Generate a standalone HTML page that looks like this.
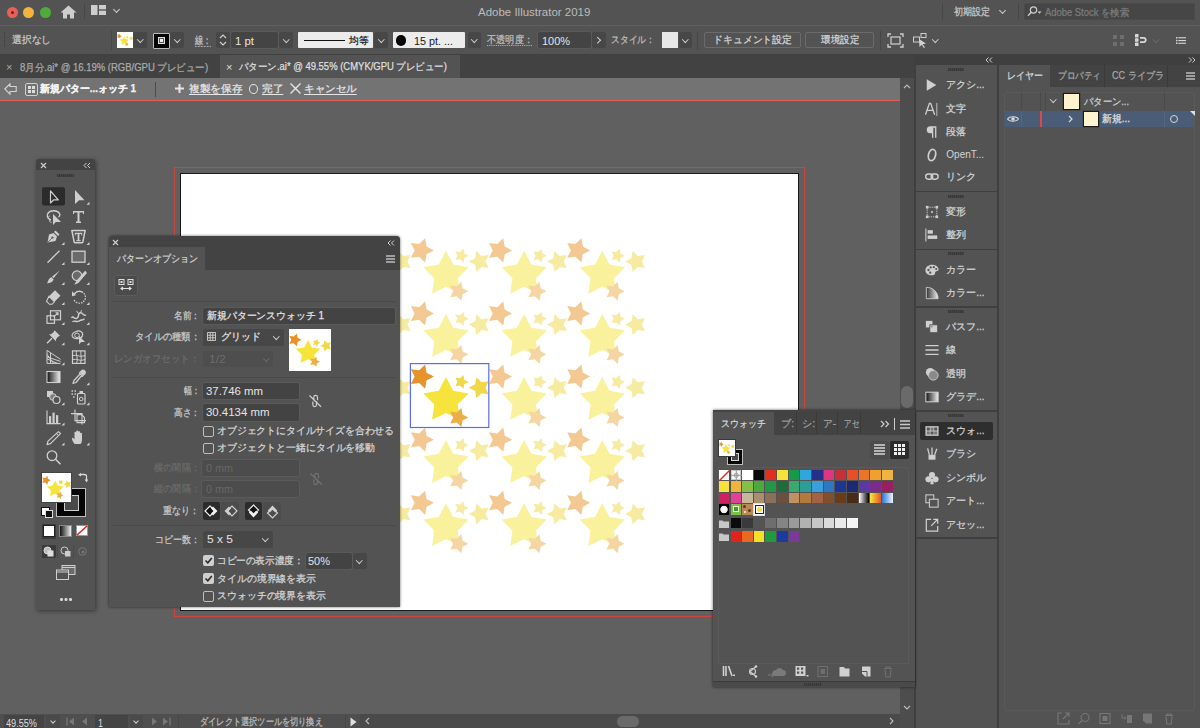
<!DOCTYPE html>
<html><head><meta charset="utf-8">
<style>
html,body{margin:0;padding:0}
body{width:1200px;height:728px;overflow:hidden;background:#606060;position:relative;font-family:"Liberation Sans",sans-serif;color:#d8d8d8;font-size:11px}
.a{position:absolute}
.t{position:absolute;white-space:nowrap;line-height:1;-webkit-text-stroke:0.25px currentColor}
.sep{position:absolute;background:#444}
.dd{position:absolute;background:#474747;border-radius:2px}
.chev{position:absolute;width:5px;height:5px;border-right:1.5px solid #cfcfcf;border-bottom:1.5px solid #cfcfcf;transform:rotate(45deg)}
.fld{position:absolute;background:#434343;border-radius:2px;box-shadow:0 0 0 1px #5a5a5a}
.cb{position:absolute;width:9px;height:9px;border:1px solid #bdbdbd;border-radius:2px}
.cbk{position:absolute;width:11px;height:11px;background:#cfcfcf;border-radius:2px}
.grip{position:absolute;height:3px;background:repeating-linear-gradient(90deg,#383838 0 1.5px,#444 1.5px 2px)}
</style></head><body>
<!-- title bar -->
<div class="a" style="left:0;top:0;width:1200px;height:25px;background:#535353"></div>
<div class="a" style="left:0;top:25.5px;width:1200px;height:1.5px;background:#444"></div>
<!-- control bar -->
<div class="a" style="left:0;top:26px;width:1200px;height:28px;background:#535353"></div>
<div class="a" style="left:0;top:54px;width:1200px;height:1px;background:#404040"></div>
<!-- doc tabs -->
<div class="a" style="left:0;top:55px;width:915px;height:23px;background:#424242"></div>
<div class="a" style="left:220px;top:55px;width:239.5px;height:23px;background:#535353"></div>
<!-- isolation bar -->
<div class="a" style="left:0;top:78px;width:900px;height:21.5px;background:#737373"></div>
<div class="a" style="left:0;top:100px;width:900px;height:2px;background:#df5f57"></div>
<!-- TITLEBAR CONTENT -->
<div class="a" style="left:6.5px;top:7px;width:11px;height:11px;border-radius:50%;background:#e9605a"></div>
<div class="a" style="left:10.5px;top:11px;width:3px;height:3px;border-radius:50%;background:#7a1a14"></div>
<div class="a" style="left:23px;top:7px;width:11px;height:11px;border-radius:50%;background:#f2b53c"></div>
<div class="a" style="left:39.5px;top:7px;width:11px;height:11px;border-radius:50%;background:#4eab3c"></div>
<svg class="a" style="left:60px;top:5px" width="17" height="14" viewBox="0 0 17 14"><path d="M8.5 0.5L0.5 7.5H3V13.5H7V9.5H10V13.5H14V7.5H16.5Z" fill="#cdcdcd"/></svg>
<div class="a" style="left:84px;top:3px;width:1px;height:16px;background:#474747"></div>
<svg class="a" style="left:91px;top:5px" width="16" height="10" viewBox="0 0 16 10"><rect x="0" y="0" width="6.5" height="10" fill="#cdcdcd"/><rect x="8" y="0" width="7" height="4.3" fill="#cdcdcd"/><rect x="8" y="5.7" width="7" height="4.3" fill="#cdcdcd"/></svg>
<div class="chev" style="left:114px;top:6.5px;width:4px;height:4px"></div>
<div class="t" style="left:478.3px;top:6.8px;font-size:11.0px;color:#bcbcbc;transform:scaleX(1.044);transform-origin:0 0;-webkit-text-stroke:0;">Adobe Illustrator 2019</div>
<div class="a" style="left:942px;top:3px;width:1px;height:17px;background:#474747"></div>
<div class="t" style="left:953.6px;top:7.3px;font-size:10.0px;color:#c8c8c8;transform:scaleX(0.900);transform-origin:0 0;">初期設定</div>
<div class="chev" style="left:999.5px;top:8px;width:4px;height:4px"></div>
<div class="a" style="left:1018px;top:3px;width:1px;height:17px;background:#474747"></div>
<div class="a" style="left:1024px;top:3px;width:171px;height:17px;background:#464646;border-radius:3px;box-shadow:inset 0 0 0 1px #4a4a4a"></div>
<svg class="a" style="left:1027px;top:6px" width="15" height="11" viewBox="0 0 15 11"><circle cx="6.5" cy="4" r="3.2" fill="none" stroke="#cfcfcf" stroke-width="1.2"/><path d="M4.3 6.3L1 9.8" stroke="#cfcfcf" stroke-width="1.3"/><path d="M10.5 5.5h4l-2 2.2z" fill="#cfcfcf"/></svg>
<div class="t" style="left:1044.8px;top:7.6px;font-size:10.0px;color:#7c7c7c;transform:scaleX(0.941);transform-origin:0 0;">Adobe Stock を検索</div>
<!-- CONTROL BAR CONTENT -->
<div class="a" style="left:4px;top:32px;width:1px;height:16px;background:repeating-linear-gradient(180deg,#3a3a3a 0 1px,transparent 1px 2px)"></div>
<div class="t" style="left:12.0px;top:35.0px;font-size:10.0px;color:#c9c9c9;transform:scaleX(0.975);transform-origin:0 0;">選択なし</div>
<div class="a" style="left:111px;top:31px;width:1px;height:19px;background:#474747"></div>
<div class="a" style="left:117px;top:32px;width:16px;height:16px;background:#fff"><svg width="16.0" height="16.0" viewBox="0 0 16.0 16.0" style="display:block"><polygon points="4.80,4.13 3.29,4.92 3.01,6.60 1.79,5.41 0.11,5.66 0.86,4.13 0.11,2.61 1.79,2.85 3.01,1.67 3.29,3.34" fill="#e8932a"/><polygon points="7.27,4.21 8.74,7.02 11.87,7.56 9.66,9.83 10.11,12.96 7.27,11.57 4.42,12.96 4.87,9.83 2.67,7.56 5.79,7.02" fill="#f6e43c"/><polygon points="11.82,12.48 10.63,13.10 10.41,14.42 9.45,13.49 8.12,13.68 8.71,12.48 8.12,11.28 9.45,11.47 10.41,10.54 10.63,11.86" fill="#ecae48"/><polygon points="11.86,5.21 10.99,5.67 10.83,6.63 10.13,5.95 9.16,6.09 9.59,5.21 9.16,4.34 10.13,4.48 10.83,3.80 10.99,4.76" fill="#f0d848"/><polygon points="11.92,6.40 13.22,5.71 13.47,4.26 14.52,5.29 15.98,5.08 15.33,6.40 15.98,7.72 14.52,7.51 13.47,8.53 13.22,7.08" fill="#f0d848"/></svg></div>
<div class="dd" style="left:133px;top:32px;width:14px;height:16px"></div>
<div class="chev" style="left:137.5px;top:36.5px;width:3.5px;height:3.5px"></div>
<div class="a" style="left:153px;top:32.5px;width:17px;height:16px;background:#050505;box-sizing:border-box;border:1px solid #bbb;border-radius:1px"></div>
<div class="a" style="left:158px;top:37px;width:6.5px;height:6.5px;background:#5a5a5a;box-sizing:border-box;border:1px solid #e0e0e0"></div>
<div class="a" style="left:160px;top:39px;width:2.5px;height:2.5px;background:#f0f0f0"></div>
<div class="dd" style="left:170px;top:32px;width:14px;height:16px"></div>
<div class="chev" style="left:174.5px;top:36.5px;width:3.5px;height:3.5px"></div>
<div class="t" style="left:195.3px;top:34.5px;font-size:11.0px;color:#c4c4c4;text-decoration:underline dotted;text-underline-offset:2px;transform:scaleX(0.750);transform-origin:0 0;">線：</div>
<div class="dd" style="left:216px;top:32px;width:14px;height:16px"></div>
<svg class="a" style="left:218px;top:33px" width="10" height="14" viewBox="0 0 10 14"><path d="M2 5L5 2L8 5M2 9L5 12L8 9" fill="none" stroke="#cfcfcf" stroke-width="1.2"/></svg>
<div class="fld" style="left:231px;top:32px;width:47px;height:16px;background:#444"></div>
<div class="t" style="left:235.0px;top:35.7px;font-size:11.0px;color:#e4e4e4;transform:scaleX(1.035);transform-origin:0 0;-webkit-text-stroke:0;">1 pt</div>
<div class="dd" style="left:279px;top:32px;width:14px;height:16px"></div>
<div class="chev" style="left:283.5px;top:36.5px;width:3.5px;height:3.5px"></div>
<div class="a" style="left:298px;top:32px;width:75px;height:16px;background:#ececec;border-radius:1px"></div>
<div class="a" style="left:303.5px;top:39.5px;width:41.5px;height:1.5px;background:#111"></div>
<div class="t" style="left:349.0px;top:36.2px;font-size:10.0px;color:#1a1a1a;transform:scaleX(0.975);transform-origin:0 0;">均等</div>
<div class="dd" style="left:374px;top:32px;width:14px;height:16px"></div>
<div class="chev" style="left:378.5px;top:36.5px;width:3.5px;height:3.5px"></div>
<div class="a" style="left:393px;top:32px;width:72px;height:16px;background:#ececec;border-radius:1px"></div>
<div class="a" style="left:395.5px;top:35px;width:10.5px;height:10.5px;background:#050505;border-radius:50%"></div>
<div class="t" style="left:413.9px;top:35.7px;font-size:11.0px;color:#1a1a1a;transform:scaleX(0.981);transform-origin:0 0;-webkit-text-stroke:0;">15 pt. ...</div>
<div class="dd" style="left:467.5px;top:32px;width:13.5px;height:16px"></div>
<div class="chev" style="left:471.5px;top:36.5px;width:3.5px;height:3.5px"></div>
<div class="t" style="left:487.4px;top:35.0px;font-size:10.0px;color:#bdbdbd;text-decoration:underline dotted;text-underline-offset:2px;transform:scaleX(0.920);transform-origin:0 0;">不透明度：</div>
<div class="fld" style="left:538px;top:32px;width:53px;height:16px;background:#444"></div>
<div class="t" style="left:541.5px;top:35.7px;font-size:11.0px;color:#e4e4e4;transform:scaleX(0.995);transform-origin:0 0;-webkit-text-stroke:0;">100%</div>
<div class="dd" style="left:592px;top:32px;width:13.5px;height:16px"></div>
<div class="chev" style="left:595px;top:38px;width:3.5px;height:3.5px;transform:rotate(-45deg)"></div>
<div class="t" style="left:611.3px;top:35.0px;font-size:10.0px;color:#bdbdbd;transform:scaleX(0.880);transform-origin:0 0;">スタイル：</div>
<div class="a" style="left:662px;top:32px;width:16px;height:16px;background:#e8e8e8"></div>
<div class="dd" style="left:679px;top:32px;width:13px;height:16px"></div>
<div class="chev" style="left:682.5px;top:36.5px;width:3.5px;height:3.5px"></div>
<div class="a" style="left:697px;top:31px;width:1px;height:19px;background:#474747"></div>
<div class="a" style="left:704px;top:31.5px;width:96.5px;height:16px;box-sizing:border-box;border:1px solid #6b6b6b;border-radius:2px"></div>
<div class="t" style="left:713.0px;top:35.0px;font-size:10.0px;color:#d4d4d4;transform:scaleX(0.988);transform-origin:0 0;">ドキュメント設定</div>
<div class="a" style="left:804.5px;top:31.5px;width:69.5px;height:16px;box-sizing:border-box;border:1px solid #6b6b6b;border-radius:2px"></div>
<div class="t" style="left:820.5px;top:35.0px;font-size:10.0px;color:#d4d4d4;transform:scaleX(0.950);transform-origin:0 0;">環境設定</div>
<div class="a" style="left:880px;top:31px;width:1px;height:19px;background:#474747"></div>
<svg class="a" style="left:887px;top:33px" width="17" height="15" viewBox="0 0 17 15"><path d="M1 4V1H4M13 1H16V4M16 11V14H13M4 14H1V11" fill="none" stroke="#d0d0d0" stroke-width="1.3"/><rect x="4" y="4" width="9" height="7" fill="none" stroke="#d0d0d0" stroke-width="1.2"/></svg>
<svg class="a" style="left:913px;top:33px" width="15" height="15" viewBox="0 0 15 15"><rect x="0.5" y="4" width="6" height="5" fill="none" stroke="#d0d0d0"/><rect x="8" y="0.5" width="5" height="4" fill="none" stroke="#d0d0d0"/><path d="M6 6L13 10.5L9.8 11.2L12 14.5L10.8 15L8.8 11.8L6.5 14Z" fill="#d0d0d0"/></svg>
<div class="chev" style="left:933px;top:36.5px;width:3.5px;height:3.5px"></div>
<svg class="a" style="left:1113px;top:35px" width="11" height="11" viewBox="0 0 11 11"><rect x="0" y="0" width="4" height="4" fill="#6e6e6e"/><rect x="7" y="0" width="4" height="4" fill="#6e6e6e"/><rect x="0" y="7" width="4" height="4" fill="#6e6e6e"/><rect x="7" y="7" width="4" height="4" fill="#6e6e6e"/></svg>
<svg class="a" style="left:1134.5px;top:34px" width="13" height="12" viewBox="0 0 13 12"><rect x="0" y="0" width="3.5" height="3.5" rx="0.5" fill="#d8d8d8"/><rect x="0" y="4.3" width="3.5" height="3.4" rx="0.5" fill="#d8d8d8"/><rect x="0" y="8.5" width="3.5" height="3.5" rx="0.5" fill="#d8d8d8"/><path d="M5 3.8H8.5A2.2 2.2 0 0 1 8.5 8.2H5" fill="none" stroke="#d8d8d8" stroke-width="1.7"/></svg>
<div class="chev" style="left:1154px;top:36.5px;width:3.5px;height:3.5px;border-color:#6a6a6a"></div>
<svg class="a" style="left:1175.5px;top:36.5px" width="10" height="7" viewBox="0 0 10 7"><rect x="0" y="0" width="1.5" height="1.5" fill="#d8d8d8"/><rect x="2.3" y="0.2" width="7.7" height="1.1" fill="#d8d8d8"/><rect x="0" y="2.8" width="1.5" height="1.5" fill="#d8d8d8"/><rect x="2.3" y="3" width="7.7" height="1.1" fill="#d8d8d8"/><rect x="0" y="5.5" width="1.5" height="1.5" fill="#d8d8d8"/><rect x="2.3" y="5.7" width="7.7" height="1.1" fill="#d8d8d8"/></svg>
<!-- DOC TABS CONTENT -->
<div class="t" style="left:6.0px;top:62.0px;font-size:11.0px;color:#a9a9a9;-webkit-text-stroke:0;">×</div>
<div class="t" style="left:20.0px;top:62.6px;font-size:10.0px;color:#a9a9a9;transform:scaleX(0.950);transform-origin:0 0;">8月分.ai* @ 16.19% (RGB/GPU プレビュー)</div>
<div class="t" style="left:226.0px;top:61.8px;font-size:11.0px;color:#dedede;-webkit-text-stroke:0;">×</div>
<div class="t" style="left:239.3px;top:62.3px;font-size:10.0px;color:#dedede;transform:scaleX(0.947);transform-origin:0 0;">パターン.ai* @ 49.55% (CMYK/GPU プレビュー)</div>
<!-- ISOLATION BAR CONTENT -->
<svg class="a" style="left:4px;top:83px" width="13" height="12" viewBox="0 0 13 12"><path d="M0.8 6L6 0.8V3.5H12.2V8.5H6V11.2Z" fill="none" stroke="#d4d4d4" stroke-width="1.1"/></svg>
<div class="a" style="left:25px;top:83px;width:11px;height:11px;border:1px solid #cfcfcf;border-radius:2px"></div>
<div class="a" style="left:27.5px;top:85.5px;width:3px;height:3px;background:#ddd"></div>
<div class="a" style="left:31.5px;top:85.5px;width:3px;height:3px;background:#ddd"></div>
<div class="a" style="left:27.5px;top:89.5px;width:3px;height:3px;background:#ddd"></div>
<div class="a" style="left:31.5px;top:89.5px;width:3px;height:3px;background:#ddd"></div>
<div class="t" style="left:40.0px;top:84.0px;font-size:10.0px;color:#f2f2f2;font-weight:bold;transform:scaleX(0.993);transform-origin:0 0;">新規パター...ォッチ 1</div>
<div class="a" style="left:154.5px;top:82px;width:1.5px;height:15px;background:#4a4a4a"></div>
<svg class="a" style="left:174.5px;top:83.5px" width="9" height="9" viewBox="0 0 9 9"><path d="M4.5 0V9M0 4.5H9" stroke="#e6e6e6" stroke-width="2"/></svg>
<div class="t" style="left:188.7px;top:83.5px;font-size:10.0px;color:#e6e6e6;text-decoration:underline;text-decoration-thickness:1px;text-underline-offset:2px;transform:scaleX(1.066);transform-origin:0 0;">複製を保存</div>
<div class="a" style="left:249px;top:83.5px;width:7px;height:8px;border:1.2px solid #e6e6e6;border-radius:50%"></div>
<div class="t" style="left:262.0px;top:83.5px;font-size:10.0px;color:#e6e6e6;text-decoration:underline;text-decoration-thickness:1px;text-underline-offset:2px;transform:scaleX(1.065);transform-origin:0 0;">完了</div>
<svg class="a" style="left:290px;top:82.5px" width="11" height="11" viewBox="0 0 11 11"><path d="M0.5 0.5L10.5 10.5M10.5 0.5L0.5 10.5" stroke="#e6e6e6" stroke-width="1.4"/></svg>
<div class="t" style="left:304.0px;top:83.5px;font-size:10.0px;color:#e6e6e6;text-decoration:underline;text-decoration-thickness:1px;text-underline-offset:2px;transform:scaleX(1.054);transform-origin:0 0;">キャンセル</div>

<!-- canvas -->
<div class="a" style="left:0;top:101px;width:900px;height:613px;background:#606060"></div>
<!-- artboard -->
<div class="a" style="left:174px;top:167px;width:631px;height:450px;border:1px solid #c9473f;box-sizing:border-box"></div>
<div class="a" style="left:180px;top:173px;width:619px;height:438px;background:#fff;border:1px solid #1a1a1a;box-sizing:border-box"></div>
<svg class="a" style="left:0;top:0" width="1200" height="728" viewBox="0 0 1200 728"><clipPath id="abclip"><rect x="181" y="174" width="618" height="436"/></clipPath><g clip-path="url(#abclip)"><g opacity="0.5"><polygon points="277.60,250.40 270.24,254.28 268.82,262.48 262.86,256.68 254.63,257.86 258.30,250.40 254.63,242.94 262.86,244.12 268.82,238.32 270.24,246.52" fill="#e8932a"/><polygon points="289.70,250.80 296.94,264.53 312.24,267.18 301.42,278.31 303.63,293.67 289.70,286.82 275.77,293.67 277.98,278.31 267.16,267.18 282.46,264.53" fill="#f6e43c"/><polygon points="312.00,291.30 306.21,294.36 305.09,300.81 300.39,296.25 293.91,297.18 296.80,291.30 293.91,285.42 300.39,286.35 305.09,281.79 306.21,288.24" fill="#ecae48"/><polygon points="312.20,255.70 307.97,257.93 307.16,262.64 303.73,259.31 298.99,259.99 301.10,255.70 298.99,251.41 303.73,252.09 307.16,248.76 307.97,253.47" fill="#f0d848"/><polygon points="312.50,261.50 318.87,258.14 320.10,251.04 325.27,256.06 332.40,255.03 329.22,261.50 332.40,267.97 325.27,266.94 320.10,271.96 318.87,264.86" fill="#f0d848"/><polygon points="277.60,313.50 270.24,317.38 268.82,325.58 262.86,319.78 254.63,320.96 258.30,313.50 254.63,306.04 262.86,307.22 268.82,301.42 270.24,309.62" fill="#e8932a"/><polygon points="289.70,313.90 296.94,327.63 312.24,330.28 301.42,341.41 303.63,356.77 289.70,349.92 275.77,356.77 277.98,341.41 267.16,330.28 282.46,327.63" fill="#f6e43c"/><polygon points="312.00,354.40 306.21,357.46 305.09,363.91 300.39,359.35 293.91,360.28 296.80,354.40 293.91,348.52 300.39,349.45 305.09,344.89 306.21,351.34" fill="#ecae48"/><polygon points="312.20,318.80 307.97,321.03 307.16,325.74 303.73,322.41 298.99,323.09 301.10,318.80 298.99,314.51 303.73,315.19 307.16,311.86 307.97,316.57" fill="#f0d848"/><polygon points="312.50,324.60 318.87,321.24 320.10,314.14 325.27,319.16 332.40,318.13 329.22,324.60 332.40,331.07 325.27,330.04 320.10,335.06 318.87,327.96" fill="#f0d848"/><polygon points="277.60,376.60 270.24,380.48 268.82,388.68 262.86,382.88 254.63,384.06 258.30,376.60 254.63,369.14 262.86,370.32 268.82,364.52 270.24,372.72" fill="#e8932a"/><polygon points="289.70,377.00 296.94,390.73 312.24,393.38 301.42,404.51 303.63,419.87 289.70,413.02 275.77,419.87 277.98,404.51 267.16,393.38 282.46,390.73" fill="#f6e43c"/><polygon points="312.00,417.50 306.21,420.56 305.09,427.01 300.39,422.45 293.91,423.38 296.80,417.50 293.91,411.62 300.39,412.55 305.09,407.99 306.21,414.44" fill="#ecae48"/><polygon points="312.20,381.90 307.97,384.13 307.16,388.84 303.73,385.51 298.99,386.19 301.10,381.90 298.99,377.61 303.73,378.29 307.16,374.96 307.97,379.67" fill="#f0d848"/><polygon points="312.50,387.70 318.87,384.34 320.10,377.24 325.27,382.26 332.40,381.23 329.22,387.70 332.40,394.17 325.27,393.14 320.10,398.16 318.87,391.06" fill="#f0d848"/><polygon points="277.60,439.70 270.24,443.58 268.82,451.78 262.86,445.98 254.63,447.16 258.30,439.70 254.63,432.24 262.86,433.42 268.82,427.62 270.24,435.82" fill="#e8932a"/><polygon points="289.70,440.10 296.94,453.83 312.24,456.48 301.42,467.61 303.63,482.97 289.70,476.12 275.77,482.97 277.98,467.61 267.16,456.48 282.46,453.83" fill="#f6e43c"/><polygon points="312.00,480.60 306.21,483.66 305.09,490.11 300.39,485.55 293.91,486.48 296.80,480.60 293.91,474.72 300.39,475.65 305.09,471.09 306.21,477.54" fill="#ecae48"/><polygon points="312.20,445.00 307.97,447.23 307.16,451.94 303.73,448.61 298.99,449.29 301.10,445.00 298.99,440.71 303.73,441.39 307.16,438.06 307.97,442.77" fill="#f0d848"/><polygon points="312.50,450.80 318.87,447.44 320.10,440.34 325.27,445.36 332.40,444.33 329.22,450.80 332.40,457.27 325.27,456.24 320.10,461.26 318.87,454.16" fill="#f0d848"/><polygon points="277.60,502.80 270.24,506.68 268.82,514.88 262.86,509.08 254.63,510.26 258.30,502.80 254.63,495.34 262.86,496.52 268.82,490.72 270.24,498.92" fill="#e8932a"/><polygon points="289.70,503.20 296.94,516.93 312.24,519.58 301.42,530.71 303.63,546.07 289.70,539.22 275.77,546.07 277.98,530.71 267.16,519.58 282.46,516.93" fill="#f6e43c"/><polygon points="312.00,543.70 306.21,546.76 305.09,553.21 300.39,548.65 293.91,549.58 296.80,543.70 293.91,537.82 300.39,538.75 305.09,534.19 306.21,540.64" fill="#ecae48"/><polygon points="312.20,508.10 307.97,510.33 307.16,515.04 303.73,511.71 298.99,512.39 301.10,508.10 298.99,503.81 303.73,504.49 307.16,501.16 307.97,505.87" fill="#f0d848"/><polygon points="312.50,513.90 318.87,510.54 320.10,503.44 325.27,508.46 332.40,507.43 329.22,513.90 332.40,520.37 325.27,519.34 320.10,524.36 318.87,517.26" fill="#f0d848"/><polygon points="355.75,250.40 348.39,254.28 346.97,262.48 341.01,256.68 332.78,257.86 336.45,250.40 332.78,242.94 341.01,244.12 346.97,238.32 348.39,246.52" fill="#e8932a"/><polygon points="367.85,250.80 375.09,264.53 390.39,267.18 379.57,278.31 381.78,293.67 367.85,286.82 353.92,293.67 356.13,278.31 345.31,267.18 360.61,264.53" fill="#f6e43c"/><polygon points="390.15,291.30 384.36,294.36 383.24,300.81 378.54,296.25 372.06,297.18 374.95,291.30 372.06,285.42 378.54,286.35 383.24,281.79 384.36,288.24" fill="#ecae48"/><polygon points="390.35,255.70 386.12,257.93 385.31,262.64 381.88,259.31 377.14,259.99 379.25,255.70 377.14,251.41 381.88,252.09 385.31,248.76 386.12,253.47" fill="#f0d848"/><polygon points="390.65,261.50 397.02,258.14 398.25,251.04 403.42,256.06 410.55,255.03 407.37,261.50 410.55,267.97 403.42,266.94 398.25,271.96 397.02,264.86" fill="#f0d848"/><polygon points="355.75,313.50 348.39,317.38 346.97,325.58 341.01,319.78 332.78,320.96 336.45,313.50 332.78,306.04 341.01,307.22 346.97,301.42 348.39,309.62" fill="#e8932a"/><polygon points="367.85,313.90 375.09,327.63 390.39,330.28 379.57,341.41 381.78,356.77 367.85,349.92 353.92,356.77 356.13,341.41 345.31,330.28 360.61,327.63" fill="#f6e43c"/><polygon points="390.15,354.40 384.36,357.46 383.24,363.91 378.54,359.35 372.06,360.28 374.95,354.40 372.06,348.52 378.54,349.45 383.24,344.89 384.36,351.34" fill="#ecae48"/><polygon points="390.35,318.80 386.12,321.03 385.31,325.74 381.88,322.41 377.14,323.09 379.25,318.80 377.14,314.51 381.88,315.19 385.31,311.86 386.12,316.57" fill="#f0d848"/><polygon points="390.65,324.60 397.02,321.24 398.25,314.14 403.42,319.16 410.55,318.13 407.37,324.60 410.55,331.07 403.42,330.04 398.25,335.06 397.02,327.96" fill="#f0d848"/><polygon points="355.75,376.60 348.39,380.48 346.97,388.68 341.01,382.88 332.78,384.06 336.45,376.60 332.78,369.14 341.01,370.32 346.97,364.52 348.39,372.72" fill="#e8932a"/><polygon points="367.85,377.00 375.09,390.73 390.39,393.38 379.57,404.51 381.78,419.87 367.85,413.02 353.92,419.87 356.13,404.51 345.31,393.38 360.61,390.73" fill="#f6e43c"/><polygon points="390.15,417.50 384.36,420.56 383.24,427.01 378.54,422.45 372.06,423.38 374.95,417.50 372.06,411.62 378.54,412.55 383.24,407.99 384.36,414.44" fill="#ecae48"/><polygon points="390.35,381.90 386.12,384.13 385.31,388.84 381.88,385.51 377.14,386.19 379.25,381.90 377.14,377.61 381.88,378.29 385.31,374.96 386.12,379.67" fill="#f0d848"/><polygon points="390.65,387.70 397.02,384.34 398.25,377.24 403.42,382.26 410.55,381.23 407.37,387.70 410.55,394.17 403.42,393.14 398.25,398.16 397.02,391.06" fill="#f0d848"/><polygon points="355.75,439.70 348.39,443.58 346.97,451.78 341.01,445.98 332.78,447.16 336.45,439.70 332.78,432.24 341.01,433.42 346.97,427.62 348.39,435.82" fill="#e8932a"/><polygon points="367.85,440.10 375.09,453.83 390.39,456.48 379.57,467.61 381.78,482.97 367.85,476.12 353.92,482.97 356.13,467.61 345.31,456.48 360.61,453.83" fill="#f6e43c"/><polygon points="390.15,480.60 384.36,483.66 383.24,490.11 378.54,485.55 372.06,486.48 374.95,480.60 372.06,474.72 378.54,475.65 383.24,471.09 384.36,477.54" fill="#ecae48"/><polygon points="390.35,445.00 386.12,447.23 385.31,451.94 381.88,448.61 377.14,449.29 379.25,445.00 377.14,440.71 381.88,441.39 385.31,438.06 386.12,442.77" fill="#f0d848"/><polygon points="390.65,450.80 397.02,447.44 398.25,440.34 403.42,445.36 410.55,444.33 407.37,450.80 410.55,457.27 403.42,456.24 398.25,461.26 397.02,454.16" fill="#f0d848"/><polygon points="355.75,502.80 348.39,506.68 346.97,514.88 341.01,509.08 332.78,510.26 336.45,502.80 332.78,495.34 341.01,496.52 346.97,490.72 348.39,498.92" fill="#e8932a"/><polygon points="367.85,503.20 375.09,516.93 390.39,519.58 379.57,530.71 381.78,546.07 367.85,539.22 353.92,546.07 356.13,530.71 345.31,519.58 360.61,516.93" fill="#f6e43c"/><polygon points="390.15,543.70 384.36,546.76 383.24,553.21 378.54,548.65 372.06,549.58 374.95,543.70 372.06,537.82 378.54,538.75 383.24,534.19 384.36,540.64" fill="#ecae48"/><polygon points="390.35,508.10 386.12,510.33 385.31,515.04 381.88,511.71 377.14,512.39 379.25,508.10 377.14,503.81 381.88,504.49 385.31,501.16 386.12,505.87" fill="#f0d848"/><polygon points="390.65,513.90 397.02,510.54 398.25,503.44 403.42,508.46 410.55,507.43 407.37,513.90 410.55,520.37 403.42,519.34 398.25,524.36 397.02,517.26" fill="#f0d848"/><polygon points="433.90,250.40 426.54,254.28 425.12,262.48 419.16,256.68 410.93,257.86 414.60,250.40 410.93,242.94 419.16,244.12 425.12,238.32 426.54,246.52" fill="#e8932a"/><polygon points="446.00,250.80 453.24,264.53 468.54,267.18 457.72,278.31 459.93,293.67 446.00,286.82 432.07,293.67 434.28,278.31 423.46,267.18 438.76,264.53" fill="#f6e43c"/><polygon points="468.30,291.30 462.51,294.36 461.39,300.81 456.69,296.25 450.21,297.18 453.10,291.30 450.21,285.42 456.69,286.35 461.39,281.79 462.51,288.24" fill="#ecae48"/><polygon points="468.50,255.70 464.27,257.93 463.46,262.64 460.03,259.31 455.29,259.99 457.40,255.70 455.29,251.41 460.03,252.09 463.46,248.76 464.27,253.47" fill="#f0d848"/><polygon points="468.80,261.50 475.17,258.14 476.40,251.04 481.57,256.06 488.70,255.03 485.52,261.50 488.70,267.97 481.57,266.94 476.40,271.96 475.17,264.86" fill="#f0d848"/><polygon points="433.90,313.50 426.54,317.38 425.12,325.58 419.16,319.78 410.93,320.96 414.60,313.50 410.93,306.04 419.16,307.22 425.12,301.42 426.54,309.62" fill="#e8932a"/><polygon points="446.00,313.90 453.24,327.63 468.54,330.28 457.72,341.41 459.93,356.77 446.00,349.92 432.07,356.77 434.28,341.41 423.46,330.28 438.76,327.63" fill="#f6e43c"/><polygon points="468.30,354.40 462.51,357.46 461.39,363.91 456.69,359.35 450.21,360.28 453.10,354.40 450.21,348.52 456.69,349.45 461.39,344.89 462.51,351.34" fill="#ecae48"/><polygon points="468.50,318.80 464.27,321.03 463.46,325.74 460.03,322.41 455.29,323.09 457.40,318.80 455.29,314.51 460.03,315.19 463.46,311.86 464.27,316.57" fill="#f0d848"/><polygon points="468.80,324.60 475.17,321.24 476.40,314.14 481.57,319.16 488.70,318.13 485.52,324.60 488.70,331.07 481.57,330.04 476.40,335.06 475.17,327.96" fill="#f0d848"/><polygon points="433.90,439.70 426.54,443.58 425.12,451.78 419.16,445.98 410.93,447.16 414.60,439.70 410.93,432.24 419.16,433.42 425.12,427.62 426.54,435.82" fill="#e8932a"/><polygon points="446.00,440.10 453.24,453.83 468.54,456.48 457.72,467.61 459.93,482.97 446.00,476.12 432.07,482.97 434.28,467.61 423.46,456.48 438.76,453.83" fill="#f6e43c"/><polygon points="468.30,480.60 462.51,483.66 461.39,490.11 456.69,485.55 450.21,486.48 453.10,480.60 450.21,474.72 456.69,475.65 461.39,471.09 462.51,477.54" fill="#ecae48"/><polygon points="468.50,445.00 464.27,447.23 463.46,451.94 460.03,448.61 455.29,449.29 457.40,445.00 455.29,440.71 460.03,441.39 463.46,438.06 464.27,442.77" fill="#f0d848"/><polygon points="468.80,450.80 475.17,447.44 476.40,440.34 481.57,445.36 488.70,444.33 485.52,450.80 488.70,457.27 481.57,456.24 476.40,461.26 475.17,454.16" fill="#f0d848"/><polygon points="433.90,502.80 426.54,506.68 425.12,514.88 419.16,509.08 410.93,510.26 414.60,502.80 410.93,495.34 419.16,496.52 425.12,490.72 426.54,498.92" fill="#e8932a"/><polygon points="446.00,503.20 453.24,516.93 468.54,519.58 457.72,530.71 459.93,546.07 446.00,539.22 432.07,546.07 434.28,530.71 423.46,519.58 438.76,516.93" fill="#f6e43c"/><polygon points="468.30,543.70 462.51,546.76 461.39,553.21 456.69,548.65 450.21,549.58 453.10,543.70 450.21,537.82 456.69,538.75 461.39,534.19 462.51,540.64" fill="#ecae48"/><polygon points="468.50,508.10 464.27,510.33 463.46,515.04 460.03,511.71 455.29,512.39 457.40,508.10 455.29,503.81 460.03,504.49 463.46,501.16 464.27,505.87" fill="#f0d848"/><polygon points="468.80,513.90 475.17,510.54 476.40,503.44 481.57,508.46 488.70,507.43 485.52,513.90 488.70,520.37 481.57,519.34 476.40,524.36 475.17,517.26" fill="#f0d848"/><polygon points="512.05,250.40 504.69,254.28 503.27,262.48 497.31,256.68 489.08,257.86 492.75,250.40 489.08,242.94 497.31,244.12 503.27,238.32 504.69,246.52" fill="#e8932a"/><polygon points="524.15,250.80 531.39,264.53 546.69,267.18 535.87,278.31 538.08,293.67 524.15,286.82 510.22,293.67 512.43,278.31 501.61,267.18 516.91,264.53" fill="#f6e43c"/><polygon points="546.45,291.30 540.66,294.36 539.54,300.81 534.84,296.25 528.36,297.18 531.25,291.30 528.36,285.42 534.84,286.35 539.54,281.79 540.66,288.24" fill="#ecae48"/><polygon points="546.65,255.70 542.42,257.93 541.61,262.64 538.18,259.31 533.44,259.99 535.55,255.70 533.44,251.41 538.18,252.09 541.61,248.76 542.42,253.47" fill="#f0d848"/><polygon points="546.95,261.50 553.32,258.14 554.55,251.04 559.72,256.06 566.85,255.03 563.67,261.50 566.85,267.97 559.72,266.94 554.55,271.96 553.32,264.86" fill="#f0d848"/><polygon points="512.05,313.50 504.69,317.38 503.27,325.58 497.31,319.78 489.08,320.96 492.75,313.50 489.08,306.04 497.31,307.22 503.27,301.42 504.69,309.62" fill="#e8932a"/><polygon points="524.15,313.90 531.39,327.63 546.69,330.28 535.87,341.41 538.08,356.77 524.15,349.92 510.22,356.77 512.43,341.41 501.61,330.28 516.91,327.63" fill="#f6e43c"/><polygon points="546.45,354.40 540.66,357.46 539.54,363.91 534.84,359.35 528.36,360.28 531.25,354.40 528.36,348.52 534.84,349.45 539.54,344.89 540.66,351.34" fill="#ecae48"/><polygon points="546.65,318.80 542.42,321.03 541.61,325.74 538.18,322.41 533.44,323.09 535.55,318.80 533.44,314.51 538.18,315.19 541.61,311.86 542.42,316.57" fill="#f0d848"/><polygon points="546.95,324.60 553.32,321.24 554.55,314.14 559.72,319.16 566.85,318.13 563.67,324.60 566.85,331.07 559.72,330.04 554.55,335.06 553.32,327.96" fill="#f0d848"/><polygon points="512.05,376.60 504.69,380.48 503.27,388.68 497.31,382.88 489.08,384.06 492.75,376.60 489.08,369.14 497.31,370.32 503.27,364.52 504.69,372.72" fill="#e8932a"/><polygon points="524.15,377.00 531.39,390.73 546.69,393.38 535.87,404.51 538.08,419.87 524.15,413.02 510.22,419.87 512.43,404.51 501.61,393.38 516.91,390.73" fill="#f6e43c"/><polygon points="546.45,417.50 540.66,420.56 539.54,427.01 534.84,422.45 528.36,423.38 531.25,417.50 528.36,411.62 534.84,412.55 539.54,407.99 540.66,414.44" fill="#ecae48"/><polygon points="546.65,381.90 542.42,384.13 541.61,388.84 538.18,385.51 533.44,386.19 535.55,381.90 533.44,377.61 538.18,378.29 541.61,374.96 542.42,379.67" fill="#f0d848"/><polygon points="546.95,387.70 553.32,384.34 554.55,377.24 559.72,382.26 566.85,381.23 563.67,387.70 566.85,394.17 559.72,393.14 554.55,398.16 553.32,391.06" fill="#f0d848"/><polygon points="512.05,439.70 504.69,443.58 503.27,451.78 497.31,445.98 489.08,447.16 492.75,439.70 489.08,432.24 497.31,433.42 503.27,427.62 504.69,435.82" fill="#e8932a"/><polygon points="524.15,440.10 531.39,453.83 546.69,456.48 535.87,467.61 538.08,482.97 524.15,476.12 510.22,482.97 512.43,467.61 501.61,456.48 516.91,453.83" fill="#f6e43c"/><polygon points="546.45,480.60 540.66,483.66 539.54,490.11 534.84,485.55 528.36,486.48 531.25,480.60 528.36,474.72 534.84,475.65 539.54,471.09 540.66,477.54" fill="#ecae48"/><polygon points="546.65,445.00 542.42,447.23 541.61,451.94 538.18,448.61 533.44,449.29 535.55,445.00 533.44,440.71 538.18,441.39 541.61,438.06 542.42,442.77" fill="#f0d848"/><polygon points="546.95,450.80 553.32,447.44 554.55,440.34 559.72,445.36 566.85,444.33 563.67,450.80 566.85,457.27 559.72,456.24 554.55,461.26 553.32,454.16" fill="#f0d848"/><polygon points="512.05,502.80 504.69,506.68 503.27,514.88 497.31,509.08 489.08,510.26 492.75,502.80 489.08,495.34 497.31,496.52 503.27,490.72 504.69,498.92" fill="#e8932a"/><polygon points="524.15,503.20 531.39,516.93 546.69,519.58 535.87,530.71 538.08,546.07 524.15,539.22 510.22,546.07 512.43,530.71 501.61,519.58 516.91,516.93" fill="#f6e43c"/><polygon points="546.45,543.70 540.66,546.76 539.54,553.21 534.84,548.65 528.36,549.58 531.25,543.70 528.36,537.82 534.84,538.75 539.54,534.19 540.66,540.64" fill="#ecae48"/><polygon points="546.65,508.10 542.42,510.33 541.61,515.04 538.18,511.71 533.44,512.39 535.55,508.10 533.44,503.81 538.18,504.49 541.61,501.16 542.42,505.87" fill="#f0d848"/><polygon points="546.95,513.90 553.32,510.54 554.55,503.44 559.72,508.46 566.85,507.43 563.67,513.90 566.85,520.37 559.72,519.34 554.55,524.36 553.32,517.26" fill="#f0d848"/><polygon points="590.20,250.40 582.84,254.28 581.42,262.48 575.46,256.68 567.23,257.86 570.90,250.40 567.23,242.94 575.46,244.12 581.42,238.32 582.84,246.52" fill="#e8932a"/><polygon points="602.30,250.80 609.54,264.53 624.84,267.18 614.02,278.31 616.23,293.67 602.30,286.82 588.37,293.67 590.58,278.31 579.76,267.18 595.06,264.53" fill="#f6e43c"/><polygon points="624.60,291.30 618.81,294.36 617.69,300.81 612.99,296.25 606.51,297.18 609.40,291.30 606.51,285.42 612.99,286.35 617.69,281.79 618.81,288.24" fill="#ecae48"/><polygon points="624.80,255.70 620.57,257.93 619.76,262.64 616.33,259.31 611.59,259.99 613.70,255.70 611.59,251.41 616.33,252.09 619.76,248.76 620.57,253.47" fill="#f0d848"/><polygon points="625.10,261.50 631.47,258.14 632.70,251.04 637.87,256.06 645.00,255.03 641.82,261.50 645.00,267.97 637.87,266.94 632.70,271.96 631.47,264.86" fill="#f0d848"/><polygon points="590.20,313.50 582.84,317.38 581.42,325.58 575.46,319.78 567.23,320.96 570.90,313.50 567.23,306.04 575.46,307.22 581.42,301.42 582.84,309.62" fill="#e8932a"/><polygon points="602.30,313.90 609.54,327.63 624.84,330.28 614.02,341.41 616.23,356.77 602.30,349.92 588.37,356.77 590.58,341.41 579.76,330.28 595.06,327.63" fill="#f6e43c"/><polygon points="624.60,354.40 618.81,357.46 617.69,363.91 612.99,359.35 606.51,360.28 609.40,354.40 606.51,348.52 612.99,349.45 617.69,344.89 618.81,351.34" fill="#ecae48"/><polygon points="624.80,318.80 620.57,321.03 619.76,325.74 616.33,322.41 611.59,323.09 613.70,318.80 611.59,314.51 616.33,315.19 619.76,311.86 620.57,316.57" fill="#f0d848"/><polygon points="625.10,324.60 631.47,321.24 632.70,314.14 637.87,319.16 645.00,318.13 641.82,324.60 645.00,331.07 637.87,330.04 632.70,335.06 631.47,327.96" fill="#f0d848"/><polygon points="590.20,376.60 582.84,380.48 581.42,388.68 575.46,382.88 567.23,384.06 570.90,376.60 567.23,369.14 575.46,370.32 581.42,364.52 582.84,372.72" fill="#e8932a"/><polygon points="602.30,377.00 609.54,390.73 624.84,393.38 614.02,404.51 616.23,419.87 602.30,413.02 588.37,419.87 590.58,404.51 579.76,393.38 595.06,390.73" fill="#f6e43c"/><polygon points="624.60,417.50 618.81,420.56 617.69,427.01 612.99,422.45 606.51,423.38 609.40,417.50 606.51,411.62 612.99,412.55 617.69,407.99 618.81,414.44" fill="#ecae48"/><polygon points="624.80,381.90 620.57,384.13 619.76,388.84 616.33,385.51 611.59,386.19 613.70,381.90 611.59,377.61 616.33,378.29 619.76,374.96 620.57,379.67" fill="#f0d848"/><polygon points="625.10,387.70 631.47,384.34 632.70,377.24 637.87,382.26 645.00,381.23 641.82,387.70 645.00,394.17 637.87,393.14 632.70,398.16 631.47,391.06" fill="#f0d848"/><polygon points="590.20,439.70 582.84,443.58 581.42,451.78 575.46,445.98 567.23,447.16 570.90,439.70 567.23,432.24 575.46,433.42 581.42,427.62 582.84,435.82" fill="#e8932a"/><polygon points="602.30,440.10 609.54,453.83 624.84,456.48 614.02,467.61 616.23,482.97 602.30,476.12 588.37,482.97 590.58,467.61 579.76,456.48 595.06,453.83" fill="#f6e43c"/><polygon points="624.60,480.60 618.81,483.66 617.69,490.11 612.99,485.55 606.51,486.48 609.40,480.60 606.51,474.72 612.99,475.65 617.69,471.09 618.81,477.54" fill="#ecae48"/><polygon points="624.80,445.00 620.57,447.23 619.76,451.94 616.33,448.61 611.59,449.29 613.70,445.00 611.59,440.71 616.33,441.39 619.76,438.06 620.57,442.77" fill="#f0d848"/><polygon points="625.10,450.80 631.47,447.44 632.70,440.34 637.87,445.36 645.00,444.33 641.82,450.80 645.00,457.27 637.87,456.24 632.70,461.26 631.47,454.16" fill="#f0d848"/><polygon points="590.20,502.80 582.84,506.68 581.42,514.88 575.46,509.08 567.23,510.26 570.90,502.80 567.23,495.34 575.46,496.52 581.42,490.72 582.84,498.92" fill="#e8932a"/><polygon points="602.30,503.20 609.54,516.93 624.84,519.58 614.02,530.71 616.23,546.07 602.30,539.22 588.37,546.07 590.58,530.71 579.76,519.58 595.06,516.93" fill="#f6e43c"/><polygon points="624.60,543.70 618.81,546.76 617.69,553.21 612.99,548.65 606.51,549.58 609.40,543.70 606.51,537.82 612.99,538.75 617.69,534.19 618.81,540.64" fill="#ecae48"/><polygon points="624.80,508.10 620.57,510.33 619.76,515.04 616.33,511.71 611.59,512.39 613.70,508.10 611.59,503.81 616.33,504.49 619.76,501.16 620.57,505.87" fill="#f0d848"/><polygon points="625.10,513.90 631.47,510.54 632.70,503.44 637.87,508.46 645.00,507.43 641.82,513.90 645.00,520.37 637.87,519.34 632.70,524.36 631.47,517.26" fill="#f0d848"/></g><polygon points="433.90,376.60 426.54,380.48 425.12,388.68 419.16,382.88 410.93,384.06 414.60,376.60 410.93,369.14 419.16,370.32 425.12,364.52 426.54,372.72" fill="#e8932a"/><polygon points="446.00,377.00 453.24,390.73 468.54,393.38 457.72,404.51 459.93,419.87 446.00,413.02 432.07,419.87 434.28,404.51 423.46,393.38 438.76,390.73" fill="#f6e43c"/><polygon points="468.30,417.50 462.51,420.56 461.39,427.01 456.69,422.45 450.21,423.38 453.10,417.50 450.21,411.62 456.69,412.55 461.39,407.99 462.51,414.44" fill="#ecae48"/><polygon points="468.50,381.90 464.27,384.13 463.46,388.84 460.03,385.51 455.29,386.19 457.40,381.90 455.29,377.61 460.03,378.29 463.46,374.96 464.27,379.67" fill="#f0d848"/><polygon points="468.80,387.70 475.17,384.34 476.40,377.24 481.57,382.26 488.70,381.23 485.52,387.70 488.70,394.17 481.57,393.14 476.40,398.16 475.17,391.06" fill="#f0d848"/><rect x="410.4" y="363.6" width="78.4" height="63.9" fill="none" stroke="#5b6cf0" stroke-width="1.2"/></g></svg>
<!-- vertical scrollbar -->
<div class="a" style="left:900px;top:78px;width:13.5px;height:650px;background:#4d4d4d"></div>
<svg class="a" style="left:902.5px;top:83.5px" width="8" height="5" viewBox="0 0 8 5"><path d="M1 4L4 1L7 4" fill="none" stroke="#bdbdbd" stroke-width="1.1"/></svg>
<div class="a" style="left:901px;top:386px;width:11.5px;height:22px;background:#6a6a6a;border-radius:6px"></div>
<svg class="a" style="left:902.5px;top:704.5px" width="8" height="5" viewBox="0 0 8 5"><path d="M1 1L4 4L7 1" fill="none" stroke="#bdbdbd" stroke-width="1.1"/></svg>
<!-- status bar -->
<div class="a" style="left:0;top:714px;width:900px;height:14px;background:#4f4f4f"></div>
<div class="a" style="left:4px;top:715px;width:40px;height:13px;background:#444"></div>
<div class="t" style="left:5.8px;top:717.5px;font-size:11.0px;color:#dedede;transform:scaleX(0.831);transform-origin:0 0;-webkit-text-stroke:0;">49.55%</div>
<div class="a" style="left:46px;top:715px;width:14px;height:13px;background:#4a4a4a"></div>
<div class="chev" style="left:50.5px;top:718.5px;width:3px;height:3px"></div>
<svg class="a" style="left:66px;top:717px" width="24" height="9" viewBox="0 0 24 9"><path d="M1 0.5V8.5" stroke="#777" stroke-width="1.3"/><path d="M8 0.5V8.5L3 4.5Z" fill="#777"/><path d="M21 0.5V8.5L16 4.5Z" fill="#777"/></svg>
<div class="a" style="left:95px;top:715px;width:33px;height:13px;background:#444"></div>
<div class="t" style="left:98.0px;top:717.5px;font-size:11.0px;color:#dedede;transform:scaleX(0.816);transform-origin:0 0;-webkit-text-stroke:0;">1</div>
<div class="a" style="left:130px;top:715px;width:13px;height:13px;background:#4a4a4a"></div>
<div class="chev" style="left:134px;top:718.5px;width:3px;height:3px"></div>
<svg class="a" style="left:150px;top:717px" width="24" height="9" viewBox="0 0 24 9"><path d="M2 0.5V8.5L7 4.5Z" fill="#777"/><path d="M13 0.5V8.5L18 4.5Z" fill="#777"/><path d="M20 0.5V8.5" stroke="#777" stroke-width="1.3"/></svg>
<div class="a" style="left:178px;top:714px;width:1px;height:14px;background:#474747"></div>
<div class="t" style="left:200.2px;top:716.7px;font-size:10.0px;color:#bdbdbd;transform:scaleX(0.819);transform-origin:0 0;">ダイレクト選択ツールを切り換え</div>
<div class="a" style="left:345px;top:714px;width:1px;height:14px;background:#474747"></div>
<svg class="a" style="left:349.5px;top:716.5px" width="7" height="10" viewBox="0 0 7 10"><path d="M0.5 0.5V9.5L6.5 5Z" fill="#e0e0e0"/></svg>
<div class="a" style="left:360px;top:714px;width:540px;height:14px;background:#4a4a4a"></div>
<svg class="a" style="left:365px;top:717px" width="5" height="8" viewBox="0 0 5 8"><path d="M4 1L1 4L4 7" fill="none" stroke="#bdbdbd" stroke-width="1.1"/></svg>
<div class="a" style="left:616.5px;top:715.5px;width:22px;height:11px;background:#6a6a6a;border-radius:6px"></div>
<svg class="a" style="left:889px;top:717px" width="5" height="8" viewBox="0 0 5 8"><path d="M1 1L4 4L1 7" fill="none" stroke="#bdbdbd" stroke-width="1.1"/></svg>
<!-- dock -->
<div class="a" style="left:914px;top:55px;width:286px;height:673px;background:#3f3f3f"></div>
<div class="a" style="left:916px;top:65px;width:81px;height:663px;background:#535353"></div>
<div class="a" style="left:999px;top:65px;width:201px;height:663px;background:#535353"></div>
<!-- tools panel -->
<div class="a" style="left:36px;top:159px;width:59px;height:451px;background:#535353;border-radius:3px 3px 0 0;box-shadow:1px 1px 4px rgba(0,0,0,.45)"></div>
<div class="a" style="left:36px;top:159px;width:59px;height:11px;background:#434343;border-radius:3px 3px 0 0"></div>
<!-- TOOLS CONTENT -->
<svg class="a" style="left:40px;top:161.5px" width="7" height="7" viewBox="0 0 7 7"><path d="M1 1L6 6M6 1L1 6" stroke="#d0d0d0" stroke-width="1.1"/></svg>
<svg class="a" style="left:83px;top:162px" width="8" height="7" viewBox="0 0 8 7"><path d="M3.5 1L1 3.5L3.5 6M7 1L4.5 3.5L7 6" fill="none" stroke="#cfcfcf" stroke-width="1"/></svg>
<div class="grip" style="left:57px;top:173.5px;width:17px"></div>
<svg class="a" style="left:36px;top:159px" width="60" height="460" viewBox="0 0 60 460"><rect x="6" y="28.3" width="23" height="18.3" rx="2" fill="#2b2b2b"/><g transform="translate(9.5,29.5)"><path d="M5 2.5V14.5L8.3 11.3L12.8 11.3Z" fill="none" stroke="#cfcfcf" stroke-width="1.2" stroke-linejoin="round"/></g><g transform="translate(34.5,29.5)"><path d="M4.5 1.5V15.5L8.5 11.8L14 11.8Z" fill="#cfcfcf"/></g><path d="M53.5 45.8h-3l3 -3z" fill="#cfcfcf"/><g transform="translate(9.5,49.5)"><path d="M5.5 11.5C1.5 10.5 0.8 6.5 3 4C5.5 1.5 12 1.5 14 5C14.8 6.5 14 8 13 8.5" fill="none" stroke="#cfcfcf" stroke-width="1.4"/><path d="M4.2 7.5c-2 0.5 -1.5 3 0.5 3.5M4.5 11c-1 1.5 0 3 1.5 3" fill="none" stroke="#cfcfcf" stroke-width="1"/><path d="M7.5 5.5V16.5L10.3 13.5L15.5 13.5Z" fill="#cfcfcf"/></g><g transform="translate(34.5,49.5)"><path d="M2.5 2.5H13.5V5.5H12.5V4H9V13H10.5V14.5H5.5V13H7V4H3.5V5.5H2.5Z" fill="#cfcfcf"/></g><g transform="translate(9.5,69.6)"><path d="M10 2L14 6L12.5 7.5L8.5 3.5Z" fill="#cfcfcf"/><path d="M8 4.5L11.5 8L10 12.5L2 14L3.5 6Z" fill="#cfcfcf"/><circle cx="7" cy="9" r="1.1" fill="#535353"/><path d="M2.5 13.5L7 9" stroke="#535353" stroke-width=".8"/></g><path d="M28.5 85.9h-3l3 -3z" fill="#cfcfcf"/><g transform="translate(34.5,69.6)"><path d="M1.5 2.5Q1 2 1.5 1.8H14.5Q15 2 14.5 2.5L12.3 13.5Q12 14.2 11.3 14.2H4.7Q4 14.2 3.7 13.5Z" fill="none" stroke="#cfcfcf" stroke-width="1.5" stroke-linejoin="round"/><path d="M4.3 4.2H11.7V6.8H10.8V5.4H8.9V11.6H10.2V12.6H5.8V11.6H7.1V5.4H5.2V6.8H4.3Z" fill="#cfcfcf"/></g><path d="M53.5 85.9h-3l3 -3z" fill="#cfcfcf"/><g transform="translate(9.5,89.7)"><path d="M2 14L14 2" stroke="#cfcfcf" stroke-width="1.3"/></g><path d="M28.5 106.0h-3l3 -3z" fill="#cfcfcf"/><g transform="translate(34.5,89.7)"><rect x="1.5" y="2.5" width="13" height="11" fill="#6a6a6a" stroke="#cfcfcf" stroke-width="1.3"/></g><path d="M53.5 106.0h-3l3 -3z" fill="#cfcfcf"/><g transform="translate(9.5,109.7)"><path d="M14.5 1.5L8 9.5L6.5 8Z" fill="#cfcfcf"/><path d="M6 8.5L8 10.5C7.5 13.5 4 14.5 1.5 14.5C3 13 2.5 9.5 6 8.5Z" fill="#cfcfcf"/></g><path d="M28.5 126.0h-3l3 -3z" fill="#cfcfcf"/><g transform="translate(34.5,109.7)"><circle cx="6.5" cy="7" r="4.8" fill="#6a6a6a" stroke="#cfcfcf" stroke-width="1.2"/><path d="M15 2.5L6.5 12.5L5.2 14.8L7.5 13.8L16 4" fill="#cfcfcf" stroke="#cfcfcf" stroke-width="1.2"/></g><path d="M53.5 126.0h-3l3 -3z" fill="#cfcfcf"/><g transform="translate(9.5,129.8)"><path d="M9.5 1.5L15 7L9 13L3.5 7.5Z" fill="#cfcfcf"/><path d="M3.5 7.5L9 13L6.5 15.5H4L1 12.5Z" fill="none" stroke="#cfcfcf" stroke-width="1.1"/></g><path d="M28.5 146.1h-3l3 -3z" fill="#cfcfcf"/><g transform="translate(34.5,129.8)"><path d="M4 5A6 6 0 1 1 3.5 11" fill="none" stroke="#cfcfcf" stroke-width="1.2" stroke-dasharray="1.6 1"/><path d="M4 5A6 6 0 0 1 12 3.5" fill="none" stroke="#cfcfcf" stroke-width="1.3"/><path d="M1.5 2.5L5.5 6.5L1.5 7.5Z" fill="#cfcfcf"/></g><path d="M53.5 146.1h-3l3 -3z" fill="#cfcfcf"/><g transform="translate(9.5,149.8)"><rect x="1.5" y="7" width="7.5" height="7.5" fill="none" stroke="#cfcfcf" stroke-width="1.2"/><rect x="5" y="2" width="10" height="9" fill="none" stroke="#cfcfcf" stroke-width="1.2"/><path d="M8 8L12.5 4M10 4H12.5V6.5" fill="none" stroke="#cfcfcf" stroke-width="1.1"/></g><path d="M28.5 166.1h-3l3 -3z" fill="#cfcfcf"/><g transform="translate(34.5,149.8)"><path d="M1 9C3 6 4 12 7 9C9 7 7 4 10 4C13 4 13 8 15.5 6M2 13C4 11 6 14 9 12C11 10.5 12 12 14 10" fill="none" stroke="#cfcfcf" stroke-width="1.4"/><path d="M6 2L8 5M11 1.5L10 4" stroke="#cfcfcf" stroke-width="1"/></g><path d="M53.5 166.1h-3l3 -3z" fill="#cfcfcf"/><g transform="translate(9.5,169.8)"><path d="M9 1.5L14.5 7L12.5 8L10.5 10.5L10.5 12.5L3.5 5.5L5.5 5.5L8 3.5Z" fill="#cfcfcf"/><path d="M6.5 9.5L1.5 14.5" stroke="#cfcfcf" stroke-width="1.5"/></g><path d="M28.5 186.2h-3l3 -3z" fill="#cfcfcf"/><g transform="translate(34.5,169.8)"><path d="M5 3C9 1 13 3 12 7C11 10 4 11 2 8C1 6 2 4 5 3Z" fill="none" stroke="#cfcfcf" stroke-width="1.2"/><circle cx="6.5" cy="6.5" r="2.3" fill="none" stroke="#cfcfcf" stroke-width="1"/><path d="M8.5 7V15.5L10.8 13.3L14.5 13.3Z" fill="#cfcfcf"/></g><path d="M53.5 186.2h-3l3 -3z" fill="#cfcfcf"/><g transform="translate(9.5,189.9)"><path d="M1.5 1.5V14.5H15M1.5 1.5L15 10.5M1.5 5.5L8 14.5M1.5 10L12 14.5M5 4V14.5M1.5 8L15 12.5" fill="none" stroke="#cfcfcf" stroke-width="1"/></g><path d="M28.5 206.2h-3l3 -3z" fill="#cfcfcf"/><g transform="translate(34.5,189.9)"><rect x="2" y="2" width="12.5" height="12.5" fill="none" stroke="#cfcfcf" stroke-width="1.2"/><path d="M2 7C6 5 9 9 14.5 6.5M2 11C6 9 9 13 14.5 10.5M6 2C5 6 8 9 6 14.5M10.5 2C9.5 6 12 9 10 14.5" fill="none" stroke="#cfcfcf" stroke-width="1"/></g><g transform="translate(9.5,210.0)"><defs><linearGradient id="tg" x1="0" x2="1"><stop offset="0" stop-color="#111"/><stop offset="1" stop-color="#eee"/></linearGradient></defs><rect x="1.5" y="2.5" width="13" height="11" fill="url(#tg)" stroke="#cfcfcf" stroke-width="1.1"/></g><g transform="translate(34.5,210.0)"><path d="M10.5 1.5A2.2 2.2 0 0 1 14.5 5.5L13 7L9 3Z" fill="#cfcfcf"/><path d="M8.5 3.5L12.5 7.5M9.8 4.8L3.5 11.5L2.5 14.5L5.5 13.5L11.3 6.3" fill="none" stroke="#cfcfcf" stroke-width="1.3" stroke-linejoin="round"/></g><path d="M53.5 226.3h-3l3 -3z" fill="#cfcfcf"/><g transform="translate(9.5,230.0)"><rect x="1.5" y="2" width="6" height="6" fill="#cfcfcf"/><circle cx="7.5" cy="8" r="3.3" fill="#7a7a7a" stroke="#cfcfcf" stroke-width="1"/><circle cx="11" cy="11" r="3.5" fill="#535353" stroke="#cfcfcf" stroke-width="1.2"/></g><path d="M28.5 246.3h-3l3 -3z" fill="#cfcfcf"/><g transform="translate(34.5,230.0)"><rect x="7" y="4.5" width="7.5" height="10.5" rx="1" fill="none" stroke="#cfcfcf" stroke-width="1.2"/><rect x="9" y="2" width="3.5" height="2.5" fill="#cfcfcf"/><circle cx="10.7" cy="10" r="1.8" fill="none" stroke="#cfcfcf"/><path d="M1 2h1.5M4 2h1.5M1 5h1.5M4 5h1.5M2.5 8h1.5" stroke="#cfcfcf" stroke-width="1.5"/></g><path d="M53.5 246.3h-3l3 -3z" fill="#cfcfcf"/><g transform="translate(9.5,250.1)"><path d="M1.5 1.5V14.5H15" fill="none" stroke="#cfcfcf" stroke-width="1.1"/><rect x="3.5" y="7" width="2.2" height="7" fill="#cfcfcf"/><rect x="7" y="3.5" width="2.2" height="10.5" fill="#cfcfcf"/><rect x="10.5" y="6" width="2.2" height="8" fill="#cfcfcf"/></g><path d="M28.5 266.4h-3l3 -3z" fill="#cfcfcf"/><g transform="translate(34.5,250.1)"><path d="M4.5 0.5V11.5H15.5M0.5 4.5H11.5V15.5" fill="none" stroke="#cfcfcf" stroke-width="1.1"/><path d="M6.5 5.5H11L14 8.5V13.5H6.5Z" fill="none" stroke="#cfcfcf" stroke-width="1.1"/></g><g transform="translate(9.5,270.1)"><path d="M13 2.5L15 4.5L5 14.5L1.5 15.5L2.5 12Z" fill="none" stroke="#cfcfcf" stroke-width="1.2" stroke-linejoin="round"/><path d="M11 4.5L13 6.5" stroke="#cfcfcf"/></g><path d="M28.5 286.4h-3l3 -3z" fill="#cfcfcf"/><g transform="translate(34.5,270.1)"><path d="M4 15C2.5 13 1 10 1.5 9C2 8 3.5 9.5 4 10.5V3.5C4 2.3 5.8 2.3 5.8 3.5V8V2.3C5.8 1 7.8 1 7.8 2.3V8V3C7.8 1.8 9.7 1.8 9.7 3V8.5V4.5C9.7 3.3 11.5 3.3 11.5 4.5V10C11.5 12.5 11 14 10 15Z" fill="#cfcfcf"/></g><path d="M53.5 286.4h-3l3 -3z" fill="#cfcfcf"/><g transform="translate(9.5,290.2)"><circle cx="6.5" cy="6.5" r="4.8" fill="none" stroke="#cfcfcf" stroke-width="1.3"/><path d="M10 10L15 15" stroke="#cfcfcf" stroke-width="1.6"/></g></svg>
<div class="a" style="left:56px;top:488px;width:30px;height:29px;background:#050505;box-sizing:border-box;border:1px solid #bdbdbd"></div>
<div class="a" style="left:63.5px;top:495px;width:15.5px;height:15.5px;box-sizing:border-box;border:1.5px solid #cfcfcf;background:#4a4a4a"></div>
<div class="a" style="left:41.5px;top:473px;width:29px;height:28.5px;background:#fff;box-shadow:0 0 0 1px #444"><svg width="29.0" height="28.5" viewBox="0 0 29.0 28.5" style="display:block"><polygon points="8.69,7.24 5.97,8.68 5.45,11.71 3.24,9.56 0.19,10.00 1.55,7.24 0.19,4.48 3.24,4.92 5.45,2.77 5.97,5.80" fill="#e8932a"/><polygon points="13.17,7.39 15.85,12.47 21.51,13.45 17.50,17.56 18.32,23.25 13.17,20.71 8.02,23.25 8.83,17.56 4.83,13.45 10.49,12.47" fill="#f6e43c"/><polygon points="21.42,22.37 19.27,23.50 18.86,25.89 17.12,24.20 14.73,24.54 15.79,22.37 14.73,20.20 17.12,20.54 18.86,18.85 19.27,21.24" fill="#ecae48"/><polygon points="21.49,9.20 19.93,10.03 19.63,11.77 18.36,10.54 16.61,10.79 17.39,9.20 16.61,7.61 18.36,7.87 19.63,6.63 19.93,8.38" fill="#f0d848"/><polygon points="21.60,11.35 23.96,10.10 24.41,7.48 26.32,9.33 28.96,8.95 27.79,11.35 28.96,13.74 26.32,13.36 24.41,15.22 23.96,12.59" fill="#f0d848"/></svg></div>
<svg class="a" style="left:77.5px;top:473px" width="10" height="10" viewBox="0 0 10 10"><path d="M2 1.5H6.5A2 2 0 0 1 8.5 3.5V7.5" fill="none" stroke="#d8d8d8" stroke-width="1.3"/><path d="M3 0L0 1.8L3 3.5Z" fill="#d8d8d8"/><path d="M6.7 6.5L8.5 9.5L10.3 6.5Z" fill="#d8d8d8"/></svg>
<div class="a" style="left:41px;top:506.5px;width:7px;height:7px;background:#fff;border:1px solid #111"></div>
<div class="a" style="left:44.5px;top:509.5px;width:6px;height:6px;background:#111;border:1px solid #ddd"></div>
<div class="a" style="left:42px;top:523.5px;width:14px;height:15px;background:#3a3a3a;border-radius:1px"></div>
<div class="a" style="left:44px;top:525.5px;width:10px;height:10px;background:#fff;box-shadow:0 0 0 1px #222"></div>
<div class="a" style="left:60px;top:525.5px;width:11px;height:10px;background:linear-gradient(90deg,#111,#f0f0f0);box-shadow:0 0 0 1px #888"></div>
<svg class="a" style="left:76px;top:525px" width="12" height="11" viewBox="0 0 12 11"><rect x="0.5" y="0.5" width="11" height="10" fill="#fff" stroke="#999"/><path d="M1 10L11 1" stroke="#e2261d" stroke-width="1.6"/></svg>
<div class="a" style="left:41.5px;top:544.5px;width:14px;height:13.5px;background:#3a3a3a;border-radius:1px"></div>
<svg class="a" style="left:43px;top:546px" width="11" height="11" viewBox="0 0 11 11"><circle cx="4.5" cy="4.5" r="3.5" fill="#bbb" stroke="#ddd"/><rect x="4.5" y="4.5" width="6" height="6" fill="#ddd"/></svg>
<svg class="a" style="left:60px;top:546px" width="11" height="11" viewBox="0 0 11 11"><circle cx="4.5" cy="4.5" r="3.5" fill="none" stroke="#ccc"/><rect x="5" y="5" width="5.5" height="5.5" fill="#ccc"/></svg>
<svg class="a" style="left:76.5px;top:546px" width="11" height="11" viewBox="0 0 11 11"><circle cx="5.5" cy="5.5" r="3.8" fill="none" stroke="#777"/><circle cx="6" cy="6" r="1.5" fill="#777"/></svg>
<div class="a" style="left:57px;top:544.5px;width:1px;height:13.5px;background:#4a4a4a"></div>
<div class="a" style="left:73px;top:544.5px;width:1px;height:13.5px;background:#4a4a4a"></div>
<svg class="a" style="left:56px;top:565px" width="20" height="15" viewBox="0 0 20 15"><rect x="6" y="0.5" width="13" height="9" fill="#6a6a6a" stroke="#cfcfcf"/><rect x="0.5" y="5" width="12" height="9.5" fill="#535353" stroke="#cfcfcf"/><path d="M6 2.5H19M0.5 7H12" stroke="#cfcfcf"/></svg>
<div class="a" style="left:60px;top:598px;width:2.6px;height:2.6px;border-radius:50%;background:#d8d8d8;box-shadow:4.5px 0 0 #d8d8d8,9px 0 0 #d8d8d8"></div>
<!-- pattern options panel -->
<div class="a" style="left:109px;top:236px;width:291px;height:371px;background:#535353;border-radius:4px 4px 0 0;box-shadow:0 0 3px rgba(0,0,0,.6)"></div>
<div class="a" style="left:109px;top:236px;width:291px;height:34px;background:#434343;border-radius:4px 4px 0 0"></div>
<div class="a" style="left:109px;top:247px;width:96px;height:23px;background:#535353"></div>
<!-- PATTERN OPTIONS CONTENT -->
<svg class="a" style="left:112px;top:239px" width="7" height="7" viewBox="0 0 7 7"><path d="M1 1L6 6M6 1L1 6" stroke="#d0d0d0" stroke-width="1.1"/></svg>
<svg class="a" style="left:387px;top:239.5px" width="8" height="6" viewBox="0 0 8 6"><path d="M3.5 0.5L1 3L3.5 5.5M7 0.5L4.5 3L7 5.5" fill="none" stroke="#cfcfcf" stroke-width="1"/></svg>
<svg class="a" style="left:386px;top:255px" width="9" height="8" viewBox="0 0 9 8"><path d="M0 1H9M0 4H9M0 7H9" stroke="#bdbdbd" stroke-width="1.3"/></svg>
<div class="t" style="left:117.3px;top:253.7px;font-size:10.0px;color:#d2d2d2;transform:scaleX(0.897);transform-origin:0 0;">パターンオプション</div>
<div class="a" style="left:114px;top:275px;width:24px;height:21px;background:#4b4b4b;border-radius:3px;box-shadow:inset 0 0 0 1px #5c5c5c"></div>
<svg class="a" style="left:118px;top:279px" width="16" height="13" viewBox="0 0 16 13"><rect x="1" y="0.5" width="5" height="5" fill="none" stroke="#e0e0e0"/><rect x="10" y="0.5" width="5" height="5" fill="none" stroke="#e0e0e0"/><rect x="2.5" y="2" width="2" height="2" fill="#e0e0e0"/><rect x="11.5" y="2" width="2" height="2" fill="#e0e0e0"/><path d="M3 9.5H13M5 8L3 9.5L5 11M11 8L13 9.5L11 11" fill="none" stroke="#e0e0e0" stroke-width="1.1"/></svg>
<div class="a" style="left:113px;top:301px;width:283px;height:1px;background:#4a4a4a"></div>
<div class="t" style="left:173.5px;top:311.0px;font-size:10.0px;color:#c8c8c8;transform:scaleX(0.867);transform-origin:0 0;">名前：</div>
<div class="fld" style="left:202.5px;top:307.5px;width:192px;height:16px"></div>
<div class="t" style="left:206.7px;top:311.0px;font-size:10.0px;color:#e2e2e2;transform:scaleX(0.989);transform-origin:0 0;">新規パターンスウォッチ 1</div>
<div class="t" style="left:134.6px;top:332.3px;font-size:10.0px;color:#c8c8c8;transform:scaleX(0.929);transform-origin:0 0;">タイルの種類：</div>
<div class="dd" style="left:202.5px;top:329px;width:81px;height:16.5px"></div>
<svg class="a" style="left:206.5px;top:332px" width="9" height="9" viewBox="0 0 9 9"><path d="M0.5 0.5H8.5V8.5H0.5ZM3.2 0.5V8.5M5.8 0.5V8.5M0.5 3.2H8.5M0.5 5.8H8.5" fill="none" stroke="#d0d0d0" stroke-width="0.9"/></svg>
<div class="t" style="left:220.5px;top:332.3px;font-size:10.0px;color:#e2e2e2;transform:scaleX(0.988);transform-origin:0 0;">グリッド</div>
<div class="chev" style="left:274px;top:334px;width:3.5px;height:3.5px"></div>
<div class="a" style="left:289px;top:329px;width:42px;height:42px;background:#fff"><svg width="42.0" height="42.0" viewBox="0 0 42.0 42.0" style="display:block"><polygon points="12.59,10.85 8.65,12.93 7.89,17.32 4.69,14.21 0.28,14.85 2.25,10.85 0.28,6.85 4.69,7.48 7.89,4.38 8.65,8.77" fill="#e8932a"/><polygon points="19.07,11.06 22.95,18.42 31.15,19.84 25.35,25.80 26.53,34.03 19.07,30.36 11.61,34.03 12.79,25.80 7.00,19.84 15.19,18.42" fill="#f6e43c"/><polygon points="31.02,32.76 27.91,34.40 27.32,37.85 24.80,35.41 21.33,35.91 22.88,32.76 21.33,29.61 24.80,30.11 27.32,27.66 27.91,31.12" fill="#ecae48"/><polygon points="31.12,13.69 28.86,14.88 28.42,17.41 26.59,15.62 24.05,15.99 25.18,13.69 24.05,11.39 26.59,11.75 28.42,9.97 28.86,12.49" fill="#f0d848"/><polygon points="31.29,16.79 34.70,14.99 35.36,11.19 38.13,13.88 41.95,13.33 40.24,16.79 41.95,20.26 38.13,19.71 35.36,22.40 34.70,18.60" fill="#f0d848"/></svg></div>
<div class="t" style="left:114.4px;top:354.2px;font-size:10.0px;color:#6c6c6c;transform:scaleX(0.944);transform-origin:0 0;">レンガオフセット：</div>
<div class="dd" style="left:202.5px;top:350.5px;width:70.5px;height:16.5px;background:#4e4e4e"></div>
<div class="t" style="left:208.7px;top:353.5px;font-size:11.0px;color:#6c6c6c;transform:scaleX(1.092);transform-origin:0 0;-webkit-text-stroke:0;">1/2</div>
<div class="chev" style="left:264px;top:355.5px;width:3.5px;height:3.5px;border-color:#6a6a6a"></div>
<div class="a" style="left:113px;top:376.5px;width:283px;height:1px;background:#4a4a4a"></div>
<div class="t" style="left:183.6px;top:385.9px;font-size:10.0px;color:#c8c8c8;transform:scaleX(0.800);transform-origin:0 0;">幅：</div>
<div class="fld" style="left:202.5px;top:382.5px;width:96.5px;height:16.5px"></div>
<div class="t" style="left:206.0px;top:385.5px;font-size:11.0px;color:#e4e4e4;transform:scaleX(1.036);transform-origin:0 0;-webkit-text-stroke:0;">37.746 mm</div>
<div class="t" style="left:173.5px;top:408.0px;font-size:10.0px;color:#c8c8c8;transform:scaleX(0.867);transform-origin:0 0;">高さ：</div>
<div class="fld" style="left:202.5px;top:404px;width:96.5px;height:16.5px"></div>
<div class="t" style="left:206.0px;top:407.0px;font-size:11.0px;color:#e4e4e4;transform:scaleX(1.038);transform-origin:0 0;-webkit-text-stroke:0;">30.4134 mm</div>
<svg class="a" style="left:307px;top:392.5px" width="15" height="15" viewBox="0 0 15 15"><path d="M6.8 7.3V4.2A1.85 1.85 0 0 1 10.5 4.2V7.3M5.8 8.6V11.8A1.85 1.85 0 0 0 9.5 11.8V8.6" fill="none" stroke="#cfcfcf" stroke-width="1.2"/><path d="M2.5 2.5L14 13.7" stroke="#cfcfcf" stroke-width="1.2"/></svg>
<div class="cb" style="left:202.5px;top:425.5px"></div>
<div class="t" style="left:216.8px;top:425.6px;font-size:10.0px;color:#d6d6d6;transform:scaleX(0.984);transform-origin:0 0;">オブジェクトにタイルサイズを合わせる</div>
<div class="cb" style="left:202.5px;top:442.5px"></div>
<div class="t" style="left:216.8px;top:442.5px;font-size:10.0px;color:#d6d6d6;transform:scaleX(0.988);transform-origin:0 0;">オブジェクトと一緒にタイルを移動</div>
<div class="t" style="left:153.6px;top:463.0px;font-size:10.0px;color:#6a6a6a;transform:scaleX(0.918);transform-origin:0 0;">横の間隔：</div>
<div class="fld" style="left:202px;top:459.5px;width:97px;height:16.5px;background:#4c4c4c"></div>
<div class="t" style="left:206.0px;top:462.5px;font-size:11.0px;color:#686868;transform:scaleX(0.982);transform-origin:0 0;-webkit-text-stroke:0;">0 mm</div>
<div class="t" style="left:153.6px;top:484.2px;font-size:10.0px;color:#6a6a6a;transform:scaleX(0.918);transform-origin:0 0;">縦の間隔：</div>
<div class="fld" style="left:202px;top:480.5px;width:97px;height:16.5px;background:#4c4c4c"></div>
<div class="t" style="left:206.0px;top:483.5px;font-size:11.0px;color:#686868;transform:scaleX(0.982);transform-origin:0 0;-webkit-text-stroke:0;">0 mm</div>
<svg class="a" style="left:308px;top:470.5px" width="15" height="15" viewBox="0 0 15 15"><path d="M6.8 7.3V4.2A1.85 1.85 0 0 1 10.5 4.2V7.3M5.8 8.6V11.8A1.85 1.85 0 0 0 9.5 11.8V8.6" fill="none" stroke="#727272" stroke-width="1.2"/><path d="M2.5 2.5L14 13.7" stroke="#727272" stroke-width="1.2"/></svg>
<div class="t" style="left:163.2px;top:506.2px;font-size:10.0px;color:#c8c8c8;transform:scaleX(0.900);transform-origin:0 0;">重なり：</div>
<div class="a" style="left:203px;top:502px;width:16.5px;height:17.5px;background:#2c2c2c;border-radius:2px"></div>
<div class="a" style="left:221px;top:502px;width:18px;height:17.5px;background:#4c4c4c;border-radius:2px"></div>
<div class="a" style="left:244.5px;top:502px;width:17.5px;height:17.5px;background:#2c2c2c;border-radius:2px"></div>
<div class="a" style="left:263px;top:502px;width:18px;height:17.5px;background:#4c4c4c;border-radius:2px"></div>
<svg class="a" style="left:204px;top:505px" width="15" height="12" viewBox="0 0 15 12"><path d="M6 1L11 6L6 11L1 6Z" fill="#111" stroke="#f0f0f0" stroke-width="1.2"/><path d="M9 1.5L13.5 6L9 10.5L7 8.5L9.5 6L7 3.5Z" fill="#f0f0f0"/></svg>
<svg class="a" style="left:223px;top:505px" width="15" height="12" viewBox="0 0 15 12"><path d="M9 1L14 6L9 11L4 6Z" fill="#4c4c4c" stroke="#cfcfcf" stroke-width="1.2"/><path d="M6 1.5L1.5 6L6 10.5L8 8.5L5.5 6L8 3.5Z" fill="#cfcfcf"/></svg>
<svg class="a" style="left:246.5px;top:503.5px" width="13" height="15" viewBox="0 0 13 15"><path d="M6.5 1L11.5 6L6.5 11L1.5 6Z" fill="#111" stroke="#f0f0f0" stroke-width="1.2"/><path d="M1.8 8.5L6.5 13.5L11.2 8.5L9.2 6.5L6.5 9.3L3.8 6.5Z" fill="#f0f0f0"/></svg>
<svg class="a" style="left:265.5px;top:503.5px" width="13" height="15" viewBox="0 0 13 15"><path d="M6.5 4L11.5 9L6.5 14L1.5 9Z" fill="#4c4c4c" stroke="#cfcfcf" stroke-width="1.2"/><path d="M1.8 6.5L6.5 1.5L11.2 6.5L9.2 8.5L6.5 5.7L3.8 8.5Z" fill="#cfcfcf"/></svg>
<div class="a" style="left:113px;top:525px;width:283px;height:1px;background:#4a4a4a"></div>
<div class="t" style="left:155.0px;top:534.5px;font-size:10.0px;color:#c8c8c8;transform:scaleX(0.890);transform-origin:0 0;">コピー数：</div>
<div class="dd" style="left:202.5px;top:531px;width:70.5px;height:16.5px"></div>
<div class="t" style="left:207.2px;top:534.0px;font-size:11.0px;color:#e2e2e2;transform:scaleX(1.090);transform-origin:0 0;-webkit-text-stroke:0;">5 x 5</div>
<div class="chev" style="left:263px;top:536px;width:3.5px;height:3.5px"></div>
<div class="cbk" style="left:202.5px;top:555px"></div>
<svg class="a" style="left:203.5px;top:556px" width="9" height="9" viewBox="0 0 9 9"><path d="M1.5 4.5L3.8 6.8L7.8 2" fill="none" stroke="#2a2a2a" stroke-width="1.6"/></svg>
<div class="t" style="left:216.8px;top:555.7px;font-size:10.0px;color:#d6d6d6;transform:scaleX(0.962);transform-origin:0 0;">コピーの表示濃度：</div>
<div class="fld" style="left:305.5px;top:552.5px;width:46px;height:16px"></div>
<div class="t" style="left:307.5px;top:555.5px;font-size:11.0px;color:#e4e4e4;transform:scaleX(0.999);transform-origin:0 0;-webkit-text-stroke:0;">50%</div>
<div class="dd" style="left:352.5px;top:552.5px;width:14px;height:16px"></div>
<div class="chev" style="left:357px;top:557.5px;width:3.5px;height:3.5px"></div>
<div class="cbk" style="left:202.5px;top:573px"></div>
<svg class="a" style="left:203.5px;top:574px" width="9" height="9" viewBox="0 0 9 9"><path d="M1.5 4.5L3.8 6.8L7.8 2" fill="none" stroke="#2a2a2a" stroke-width="1.6"/></svg>
<div class="t" style="left:216.8px;top:573.8px;font-size:10.0px;color:#d6d6d6;transform:scaleX(0.990);transform-origin:0 0;">タイルの境界線を表示</div>
<div class="cb" style="left:202.5px;top:590.5px"></div>
<div class="t" style="left:216.8px;top:590.9px;font-size:10.0px;color:#d6d6d6;transform:scaleX(0.991);transform-origin:0 0;">スウォッチの境界を表示</div>
<!-- swatches panel -->
<div class="a" style="left:713px;top:409.5px;width:202px;height:277.5px;background:#535353;box-shadow:0 0 3px rgba(0,0,0,.6)"></div>
<div class="a" style="left:713px;top:409.5px;width:202px;height:25px;background:#434343"></div>
<div class="a" style="left:713px;top:412px;width:61px;height:22.5px;background:#535353"></div>
<div class="a" style="left:718.8px;top:469.6px;width:10.6px;height:10.6px;background:#fff"><svg width="11" height="11" style="display:block"><line x1="0.5" y1="10.5" x2="10.5" y2="0.5" stroke="#e3261c" stroke-width="1.4"/></svg></div><div class="a" style="left:730.5px;top:469.6px;width:10.6px;height:10.6px;background:#f4f4f4;box-shadow:inset 0 0 0 1px #ccc"><svg width="11" height="11" style="display:block"><path d="M5.3 0V11M0 5.3H11" stroke="#9a9a9a" stroke-width="1"/><circle cx="5.3" cy="5.3" r="2" fill="none" stroke="#9a9a9a"/></svg></div><div class="a" style="left:742.1px;top:469.6px;width:10.6px;height:10.6px;background:#ffffff"></div><div class="a" style="left:753.8px;top:469.6px;width:10.6px;height:10.6px;background:#0a0a0a"></div><div class="a" style="left:765.4px;top:469.6px;width:10.6px;height:10.6px;background:#e2301f"></div><div class="a" style="left:777.1px;top:469.6px;width:10.6px;height:10.6px;background:#f7e236"></div><div class="a" style="left:788.8px;top:469.6px;width:10.6px;height:10.6px;background:#149a48"></div><div class="a" style="left:800.4px;top:469.6px;width:10.6px;height:10.6px;background:#2ea7df"></div><div class="a" style="left:812.1px;top:469.6px;width:10.6px;height:10.6px;background:#253089"></div><div class="a" style="left:823.7px;top:469.6px;width:10.6px;height:10.6px;background:#df3680"></div><div class="a" style="left:835.4px;top:469.6px;width:10.6px;height:10.6px;background:#c7303a"></div><div class="a" style="left:847.1px;top:469.6px;width:10.6px;height:10.6px;background:#e84f28"></div><div class="a" style="left:858.7px;top:469.6px;width:10.6px;height:10.6px;background:#ea7526"></div><div class="a" style="left:870.4px;top:469.6px;width:10.6px;height:10.6px;background:#efa02e"></div><div class="a" style="left:882.0px;top:469.6px;width:10.6px;height:10.6px;background:#f0b445"></div><div class="a" style="left:718.8px;top:481.2px;width:10.6px;height:10.6px;background:#f5e23a"></div><div class="a" style="left:730.5px;top:481.2px;width:10.6px;height:10.6px;background:#eeb43e"></div><div class="a" style="left:742.1px;top:481.2px;width:10.6px;height:10.6px;background:#86bf48"></div><div class="a" style="left:753.8px;top:481.2px;width:10.6px;height:10.6px;background:#4fa83c"></div><div class="a" style="left:765.4px;top:481.2px;width:10.6px;height:10.6px;background:#249646"></div><div class="a" style="left:777.1px;top:481.2px;width:10.6px;height:10.6px;background:#1f6b3c"></div><div class="a" style="left:788.8px;top:481.2px;width:10.6px;height:10.6px;background:#3da76c"></div><div class="a" style="left:800.4px;top:481.2px;width:10.6px;height:10.6px;background:#2f9c98"></div><div class="a" style="left:812.1px;top:481.2px;width:10.6px;height:10.6px;background:#3a9fdc"></div><div class="a" style="left:823.7px;top:481.2px;width:10.6px;height:10.6px;background:#2f77c0"></div><div class="a" style="left:835.4px;top:481.2px;width:10.6px;height:10.6px;background:#1d3696"></div><div class="a" style="left:847.1px;top:481.2px;width:10.6px;height:10.6px;background:#1c2a72"></div><div class="a" style="left:858.7px;top:481.2px;width:10.6px;height:10.6px;background:#5a39a0"></div><div class="a" style="left:870.4px;top:481.2px;width:10.6px;height:10.6px;background:#782d88"></div><div class="a" style="left:882.0px;top:481.2px;width:10.6px;height:10.6px;background:#98205e"></div><div class="a" style="left:718.8px;top:492.8px;width:10.6px;height:10.6px;background:#cf2060"></div><div class="a" style="left:730.5px;top:492.8px;width:10.6px;height:10.6px;background:#e0409a"></div><div class="a" style="left:742.1px;top:492.8px;width:10.6px;height:10.6px;background:#c6b79b"></div><div class="a" style="left:753.8px;top:492.8px;width:10.6px;height:10.6px;background:#a88f6f"></div><div class="a" style="left:765.4px;top:492.8px;width:10.6px;height:10.6px;background:#8a7059"></div><div class="a" style="left:777.1px;top:492.8px;width:10.6px;height:10.6px;background:#6b5040"></div><div class="a" style="left:788.8px;top:492.8px;width:10.6px;height:10.6px;background:#c29163"></div><div class="a" style="left:800.4px;top:492.8px;width:10.6px;height:10.6px;background:#b27a3c"></div><div class="a" style="left:812.1px;top:492.8px;width:10.6px;height:10.6px;background:#a46244"></div><div class="a" style="left:823.7px;top:492.8px;width:10.6px;height:10.6px;background:#80502e"></div><div class="a" style="left:835.4px;top:492.8px;width:10.6px;height:10.6px;background:#6b3a18"></div><div class="a" style="left:847.1px;top:492.8px;width:10.6px;height:10.6px;background:#4a2c16"></div><div class="a" style="left:858.7px;top:492.8px;width:10.6px;height:10.6px;background:linear-gradient(90deg,#fff,#000)"></div><div class="a" style="left:870.4px;top:492.8px;width:10.6px;height:10.6px;background:linear-gradient(90deg,#f7ea3a,#e8502a)"></div><div class="a" style="left:882.0px;top:492.8px;width:10.6px;height:10.6px;background:linear-gradient(90deg,#2a78d8,#f0f4ff)"></div><div class="a" style="left:718.8px;top:504.4px;width:10.6px;height:10.6px;background:radial-gradient(circle,#fff 0,#eee 45%,#000 55%)"></div><div class="a" style="left:730.5px;top:504.4px;width:10.6px;height:10.6px;background:#7cc04a"><div class="a" style="left:2px;top:2px;width:6px;height:6px;background:#f4f0c8"></div><div class="a" style="left:3px;top:3px;width:4px;height:4px;background:#3a9a3a"></div></div><div class="a" style="left:742.1px;top:504.4px;width:10.6px;height:10.6px;background:#b88a5a"><div class="a" style="left:1px;top:1px;width:3px;height:3px;background:#5a3a20;border-radius:50%"></div><div class="a" style="left:6px;top:5px;width:3px;height:3px;background:#5a3a20;border-radius:50%"></div><div class="a" style="left:2px;top:7px;width:2px;height:2px;background:#e8d8b8"></div></div><div class="a" style="left:752.8px;top:503.4px;width:10.6px;height:10.6px;border:1px solid #ddd;background:#fff;overflow:hidden"><div class="a" style="left:1px;top:1px;width:9px;height:9px;background:#222"></div><div class="a" style="left:2px;top:2px;width:7px;height:7px;background:#fff"></div><div class="a" style="left:3px;top:3px;width:5px;height:5px;background:#f3de3a;border-radius:50%"></div></div><svg class="a" style="left:719.3px;top:518.7px" width="10" height="9" viewBox="0 0 10 9"><path d="M0 1.5h3.5l1 1H10V9H0z" fill="#c8c8c8"/></svg><div class="a" style="left:730.5px;top:517.7px;width:10.6px;height:10.6px;background:#0b0b0b"></div><div class="a" style="left:742.1px;top:517.7px;width:10.6px;height:10.6px;background:#3a3a3a"></div><div class="a" style="left:753.8px;top:517.7px;width:10.6px;height:10.6px;background:#545454"></div><div class="a" style="left:765.4px;top:517.7px;width:10.6px;height:10.6px;background:#6e6e6e"></div><div class="a" style="left:777.1px;top:517.7px;width:10.6px;height:10.6px;background:#858585"></div><div class="a" style="left:788.8px;top:517.7px;width:10.6px;height:10.6px;background:#9b9b9b"></div><div class="a" style="left:800.4px;top:517.7px;width:10.6px;height:10.6px;background:#b1b1b1"></div><div class="a" style="left:812.1px;top:517.7px;width:10.6px;height:10.6px;background:#c6c6c6"></div><div class="a" style="left:823.7px;top:517.7px;width:10.6px;height:10.6px;background:#dadada"></div><div class="a" style="left:835.4px;top:517.7px;width:10.6px;height:10.6px;background:#eaeaea"></div><div class="a" style="left:847.1px;top:517.7px;width:10.6px;height:10.6px;background:#f6f6f6"></div><svg class="a" style="left:719.3px;top:532.0px" width="10" height="9" viewBox="0 0 10 9"><path d="M0 1.5h3.5l1 1H10V9H0z" fill="#c8c8c8"/></svg><div class="a" style="left:730.5px;top:531.0px;width:10.6px;height:10.6px;background:#e2231a"></div><div class="a" style="left:742.1px;top:531.0px;width:10.6px;height:10.6px;background:#e8691f"></div><div class="a" style="left:753.8px;top:531.0px;width:10.6px;height:10.6px;background:#f6df2a"></div><div class="a" style="left:765.4px;top:531.0px;width:10.6px;height:10.6px;background:#1f9a3c"></div><div class="a" style="left:777.1px;top:531.0px;width:10.6px;height:10.6px;background:#1c3aa2"></div><div class="a" style="left:788.8px;top:531.0px;width:10.6px;height:10.6px;background:#7b3a9a"></div>
<!-- SWATCHES CONTENT -->
<div class="t" style="left:721.4px;top:418.9px;font-size:10.0px;color:#d6d6d6;transform:scaleX(0.892);transform-origin:0 0;">スウォッチ</div>
<div class="a" style="left:795.5px;top:412px;width:1px;height:22px;background:#3a3a3a"></div>
<div class="a" style="left:815.5px;top:412px;width:1px;height:22px;background:#3a3a3a"></div>
<div class="a" style="left:836.5px;top:412px;width:1px;height:22px;background:#3a3a3a"></div>
<div class="a" style="left:860px;top:412px;width:1px;height:22px;background:#3a3a3a"></div>
<div class="t" style="left:781.0px;top:419.0px;font-size:10.0px;color:#a0a0a0;transform:scaleX(1.017);transform-origin:0 0;">ブ:</div>
<div class="t" style="left:802.0px;top:419.0px;font-size:10.0px;color:#a0a0a0;transform:scaleX(1.017);transform-origin:0 0;">シ:</div>
<div class="t" style="left:823.0px;top:419.0px;font-size:10.0px;color:#a0a0a0;transform:scaleX(0.974);transform-origin:0 0;">ア-</div>
<div class="t" style="left:844.0px;top:419.0px;font-size:10.0px;color:#a0a0a0;transform:scaleX(0.750);transform-origin:0 0;">アセ</div>
<svg class="a" style="left:879.5px;top:420px" width="10" height="8" viewBox="0 0 10 8"><path d="M1 1L4 4L1 7M5.5 1L8.5 4L5.5 7" fill="none" stroke="#d0d0d0" stroke-width="1.2"/></svg>
<div class="a" style="left:893.5px;top:418px;width:1px;height:12px;background:#cfcfcf"></div>
<svg class="a" style="left:900px;top:419.5px" width="10" height="9" viewBox="0 0 10 9"><path d="M0 1H10M0 4.5H10M0 8H10" stroke="#c8c8c8" stroke-width="1.3"/></svg>
<div class="a" style="left:727px;top:449px;width:16px;height:15.5px;background:#050505;box-sizing:border-box;border:1px solid #bdbdbd"></div>
<div class="a" style="left:731px;top:453px;width:8px;height:7.5px;box-sizing:border-box;border:1.2px solid #d8d8d8;background:#4a4a4a"></div>
<div class="a" style="left:719px;top:440px;width:15.5px;height:16px;background:#fff;box-shadow:0 0 0 1px #3a3a3a"><svg width="15.5" height="16.0" viewBox="0 0 15.5 16.0" style="display:block"><polygon points="4.65,4.25 3.19,5.02 2.91,6.64 1.73,5.50 0.10,5.73 0.83,4.25 0.10,2.78 1.73,3.01 2.91,1.87 3.19,3.49" fill="#e8932a"/><polygon points="7.04,4.33 8.47,7.05 11.49,7.57 9.36,9.77 9.79,12.81 7.04,11.45 4.28,12.81 4.72,9.77 2.58,7.57 5.61,7.05" fill="#f6e43c"/><polygon points="11.45,12.34 10.30,12.94 10.08,14.22 9.15,13.32 7.87,13.50 8.44,12.34 7.87,11.18 9.15,11.36 10.08,10.46 10.30,11.74" fill="#ecae48"/><polygon points="11.49,5.30 10.65,5.74 10.49,6.67 9.81,6.02 8.88,6.15 9.29,5.30 8.88,4.45 9.81,4.59 10.49,3.93 10.65,4.86" fill="#f0d848"/><polygon points="11.55,6.45 12.81,5.78 13.05,4.38 14.07,5.37 15.48,5.17 14.85,6.45 15.48,7.73 14.07,7.52 13.05,8.52 12.81,7.11" fill="#f0d848"/></svg></div>
<div class="a" style="left:870px;top:441px;width:18.5px;height:17.5px;background:#4c4c4c;border-radius:2px"></div>
<svg class="a" style="left:874px;top:444px" width="11" height="11" viewBox="0 0 11 11"><path d="M0 1H11M0 4H11M0 7H11M0 10H11" stroke="#d8d8d8" stroke-width="1.3"/></svg>
<div class="a" style="left:890px;top:441px;width:18.5px;height:17.5px;background:#2c2c2c;border-radius:2px"></div>
<svg class="a" style="left:893.5px;top:444px" width="11" height="11" viewBox="0 0 11 11"><rect x="0" y="0" width="3" height="3" fill="#f0f0f0"/><rect x="4" y="0" width="3" height="3" fill="#f0f0f0"/><rect x="8" y="0" width="3" height="3" fill="#f0f0f0"/><rect x="0" y="4" width="3" height="3" fill="#f0f0f0"/><rect x="4" y="4" width="3" height="3" fill="#f0f0f0"/><rect x="8" y="4" width="3" height="3" fill="#f0f0f0"/><rect x="0" y="8" width="3" height="3" fill="#f0f0f0"/><rect x="4" y="8" width="3" height="3" fill="#f0f0f0"/><rect x="8" y="8" width="3" height="3" fill="#f0f0f0"/></svg>
<div class="a" style="left:718px;top:467px;width:191px;height:197px;box-sizing:border-box;border:1px solid #5a5a5a"></div>
<svg class="a" style="left:721.5px;top:664px" width="180" height="16" viewBox="0 0 180 16">
<path d="M1.5 2V12M4 2V12M6.5 2L10 12" stroke="#d0d0d0" stroke-width="1.6"/><rect x="11" y="10.5" width="2" height="1.5" fill="#d0d0d0"/>
<circle cx="30.5" cy="7.5" r="3" fill="none" stroke="#d0d0d0" stroke-width="1.1"/><path d="M28 7.5L34 2.5M28 7.5L34 12.5" stroke="#d0d0d0" stroke-width="1.1"/><circle cx="34" cy="2.5" r="1.3" fill="#d0d0d0"/><circle cx="34" cy="12.5" r="1.3" fill="#d0d0d0"/>
<path d="M46 11H52M50 9L52 11L50 13" fill="none" stroke="#7a7a7a" stroke-width="1.1"/><path d="M53 12A3 3 0 0 1 54 6A4 4 0 0 1 61 6A3 3 0 0 1 61 12Z" fill="#7a7a7a"/>
<rect x="73.5" y="2" width="10" height="10" fill="#d0d0d0"/><rect x="75" y="3.5" width="2.2" height="2.2" fill="#535353"/><rect x="79" y="3.5" width="2.2" height="2.2" fill="#535353"/><rect x="75" y="7.5" width="2.2" height="2.2" fill="#535353"/><rect x="79" y="7.5" width="2.2" height="2.2" fill="#535353"/><rect x="84.5" y="11" width="2" height="1.5" fill="#d0d0d0"/>
<rect x="96" y="2.5" width="9.5" height="10" fill="none" stroke="#6e6e6e" stroke-width="1.1"/><rect x="98.5" y="5" width="4.5" height="5" fill="#6e6e6e"/>
<path d="M117.5 3H122L123 4.5H127.5V12.5H117.5Z" fill="#d0d0d0"/>
<path d="M140 2.5H148.5V12.5H143L140 9.5Z" fill="#d0d0d0"/><path d="M140 7.5H145V12.5" fill="none" stroke="#535353" stroke-width="1"/>
<path d="M162 4.5H170M164 4.5V3H168V4.5M163 5.5L163.8 13H168.2L169 5.5" fill="none" stroke="#6e6e6e" stroke-width="1.1"/>
</svg>
<div class="a" style="left:713px;top:681px;width:202px;height:6px;background:#4a4a4a;border-top:1px solid #3a3a3a;box-sizing:border-box"></div>
<div class="grip" style="left:804px;top:683px;width:18px;height:3px"></div>

<!-- DOCK CONTENT -->
<svg class="a" style="left:985px;top:57px" width="8" height="6" viewBox="0 0 8 6"><path d="M3.5 0.5L1 3L3.5 5.5M7 0.5L4.5 3L7 5.5" fill="none" stroke="#cfcfcf" stroke-width="1"/></svg>
<svg class="a" style="left:1187.5px;top:57px" width="8" height="6" viewBox="0 0 8 6"><path d="M1 0.5L3.5 3L1 5.5M4.5 0.5L7 3L4.5 5.5" fill="none" stroke="#cfcfcf" stroke-width="1"/></svg>
<div class="a" style="left:916px;top:190.5px;width:81px;height:1.5px;background:#3f3f3f"></div>
<div class="a" style="left:916px;top:248.5px;width:81px;height:1.5px;background:#3f3f3f"></div>
<div class="a" style="left:916px;top:306.1px;width:81px;height:1.5px;background:#3f3f3f"></div>
<div class="a" style="left:916px;top:410.3px;width:81px;height:1.5px;background:#3f3f3f"></div>
<div class="a" style="left:916px;top:537.3px;width:81px;height:1.5px;background:#3f3f3f"></div>
<div class="grip" style="left:948px;top:67.5px;width:16px"></div>
<div class="grip" style="left:948px;top:195.0px;width:16px"></div>
<div class="grip" style="left:948px;top:252.3px;width:16px"></div>
<div class="grip" style="left:948px;top:309.5px;width:16px"></div>
<div class="grip" style="left:948px;top:413.6px;width:16px"></div>
<div class="a" style="left:919.5px;top:422px;width:73px;height:17.5px;background:#2e2e2e;border-radius:2px"></div>
<svg class="a" style="left:924.5px;top:77.8px" width="14" height="14" viewBox="0 0 16 16"><path d="M2 1.5V14.5L13 8Z" fill="#cfcfcf"/></svg>
<div class="t" style="left:946.3px;top:79.8px;font-size:10.0px;color:#d4d4d4;">アクシ...</div>
<svg class="a" style="left:924.5px;top:101.7px" width="14" height="14" viewBox="0 0 16 16"><path d="M0.5 14.5L5 1.5H6.5L11 14.5M2.5 9.5H9" fill="none" stroke="#cfcfcf" stroke-width="1.5"/><path d="M13.5 1V16" stroke="#cfcfcf" stroke-width="1"/></svg>
<div class="t" style="left:946.3px;top:103.7px;font-size:10.0px;color:#d4d4d4;">文字</div>
<svg class="a" style="left:924.5px;top:124.9px" width="14" height="14" viewBox="0 0 16 16"><path d="M6 1.5H13V14.5H11.5V3H9.5V14.5H8V9.5H6A4 4 0 0 1 6 1.5Z" fill="#cfcfcf"/></svg>
<div class="t" style="left:946.3px;top:126.9px;font-size:10.0px;color:#d4d4d4;">段落</div>
<svg class="a" style="left:924.5px;top:147.6px" width="14" height="14" viewBox="0 0 16 16"><ellipse cx="8" cy="8" rx="4" ry="6.5" fill="none" stroke="#cfcfcf" stroke-width="2" transform="rotate(15 8 8)"/></svg>
<div class="t" style="left:946.3px;top:149.6px;font-size:10.0px;color:#d4d4d4;-webkit-text-stroke:0;">OpenT...</div>
<svg class="a" style="left:924.5px;top:170.3px" width="14" height="14" viewBox="0 0 16 16"><rect x="0.8" y="4.5" width="8" height="6" rx="3" fill="none" stroke="#cfcfcf" stroke-width="1.6"/><rect x="7" y="4.5" width="8" height="6" rx="3" fill="none" stroke="#cfcfcf" stroke-width="1.6"/></svg>
<div class="t" style="left:946.3px;top:172.3px;font-size:10.0px;color:#d4d4d4;">リンク</div>
<svg class="a" style="left:924.5px;top:205.3px" width="14" height="14" viewBox="0 0 16 16"><rect x="2.5" y="2.5" width="11" height="11" fill="none" stroke="#cfcfcf" stroke-width="1" stroke-dasharray="1.5 1"/><rect x="1" y="1" width="3" height="3" fill="#cfcfcf"/><rect x="12" y="1" width="3" height="3" fill="#cfcfcf"/><rect x="1" y="12" width="3" height="3" fill="#cfcfcf"/><rect x="12" y="12" width="3" height="3" fill="#cfcfcf"/><rect x="7" y="7" width="2" height="2" fill="#cfcfcf"/></svg>
<div class="t" style="left:946.3px;top:207.3px;font-size:10.0px;color:#d4d4d4;">変形</div>
<svg class="a" style="left:924.5px;top:228.4px" width="14" height="14" viewBox="0 0 16 16"><path d="M1 0.5V15.5" stroke="#cfcfcf" stroke-width="1.2"/><rect x="3" y="2.5" width="6" height="4" fill="#cfcfcf"/><rect x="3" y="8.5" width="11" height="4" fill="#cfcfcf"/></svg>
<div class="t" style="left:946.3px;top:230.4px;font-size:10.0px;color:#d4d4d4;">整列</div>
<svg class="a" style="left:924.5px;top:262.6px" width="14" height="14" viewBox="0 0 16 16"><path d="M8 2C12.5 2 15.5 4.5 15.5 7.5C15.5 9.5 13 9 12 10C11 11 12.5 13.5 9 14C4 14.5 0.5 12 0.5 8.5C0.5 4.5 4 2 8 2Z" fill="#cfcfcf"/><circle cx="4" cy="8" r="1.3" fill="#535353"/><circle cx="6.5" cy="5" r="1.3" fill="#535353"/><circle cx="10" cy="4.8" r="1.3" fill="#535353"/><circle cx="12.8" cy="6.8" r="1.2" fill="#535353"/><circle cx="6" cy="11" r="1.3" fill="#535353"/></svg>
<div class="t" style="left:946.3px;top:264.6px;font-size:10.0px;color:#d4d4d4;">カラー</div>
<svg class="a" style="left:924.5px;top:285.6px" width="14" height="14" viewBox="0 0 16 16"><defs><linearGradient id="cg" x1="0" x2="1"><stop offset="0" stop-color="#333"/><stop offset="1" stop-color="#eee"/></linearGradient></defs><path d="M1.5 1.5V14.5H15C15 7 9 1.5 1.5 1.5Z" fill="url(#cg)" stroke="#cfcfcf" stroke-width="1"/></svg>
<div class="t" style="left:946.3px;top:287.6px;font-size:10.0px;color:#d4d4d4;">カラー...</div>
<svg class="a" style="left:924.5px;top:319.7px" width="14" height="14" viewBox="0 0 16 16"><rect x="1" y="1" width="7.5" height="7.5" fill="#cfcfcf"/><rect x="5.5" y="5.5" width="9" height="9" fill="#cfcfcf" stroke="#535353" stroke-width="1"/><rect x="6.5" y="6.5" width="2" height="2" fill="#8a8a8a"/></svg>
<div class="t" style="left:946.3px;top:321.7px;font-size:10.0px;color:#d4d4d4;">パスフ...</div>
<svg class="a" style="left:924.5px;top:343.4px" width="14" height="14" viewBox="0 0 16 16"><path d="M0.5 3H15.5M0.5 8H15.5M0.5 13H15.5" stroke="#cfcfcf" stroke-width="1.6"/></svg>
<div class="t" style="left:946.3px;top:345.4px;font-size:10.0px;color:#d4d4d4;">線</div>
<svg class="a" style="left:924.5px;top:366.8px" width="14" height="14" viewBox="0 0 16 16"><circle cx="6" cy="6" r="5" fill="#cfcfcf"/><circle cx="9.5" cy="9.5" r="5.5" fill="#8a8a8a" stroke="#cfcfcf" stroke-width="1"/></svg>
<div class="t" style="left:946.3px;top:368.8px;font-size:10.0px;color:#d4d4d4;">透明</div>
<svg class="a" style="left:924.5px;top:389.8px" width="14" height="14" viewBox="0 0 16 16"><defs><linearGradient id="gg" x1="0" x2="1"><stop offset="0" stop-color="#111"/><stop offset="1" stop-color="#eee"/></linearGradient></defs><rect x="1" y="2.5" width="14" height="11" fill="url(#gg)" stroke="#cfcfcf" stroke-width="1.2"/></svg>
<div class="t" style="left:946.3px;top:391.8px;font-size:10.0px;color:#d4d4d4;">グラデ...</div>
<svg class="a" style="left:924.5px;top:424.0px" width="14" height="14" viewBox="0 0 16 16"><rect x="0.5" y="2.5" width="15" height="11" fill="#cfcfcf"/><rect x="2" y="4" width="3.5" height="3.5" fill="#555"/><rect x="6.3" y="4" width="3.5" height="3.5" fill="#777"/><rect x="10.5" y="4" width="3.5" height="3.5" fill="#555"/><rect x="2" y="8.5" width="3.5" height="3.5" fill="#777"/><rect x="6.3" y="8.5" width="3.5" height="3.5" fill="#555"/><rect x="10.5" y="8.5" width="3.5" height="3.5" fill="#777"/></svg>
<div class="t" style="left:946.3px;top:426.0px;font-size:10.0px;color:#d4d4d4;">スウォ...</div>
<svg class="a" style="left:924.5px;top:447.3px" width="14" height="14" viewBox="0 0 16 16"><path d="M4 9H12V14.5H4Z" fill="#cfcfcf"/><path d="M5 9L3 1.5M8 9V0.5M11 9L13.5 2" stroke="#cfcfcf" stroke-width="1.5"/></svg>
<div class="t" style="left:946.3px;top:449.3px;font-size:10.0px;color:#d4d4d4;">ブラシ</div>
<svg class="a" style="left:924.5px;top:470.7px" width="14" height="14" viewBox="0 0 16 16"><circle cx="8" cy="4.5" r="3.5" fill="#cfcfcf"/><circle cx="4" cy="9.5" r="3.5" fill="#cfcfcf"/><circle cx="12" cy="9.5" r="3.5" fill="#cfcfcf"/><path d="M7 9H9L10 15H6Z" fill="#cfcfcf"/></svg>
<div class="t" style="left:946.3px;top:472.7px;font-size:10.0px;color:#d4d4d4;">シンボル</div>
<svg class="a" style="left:924.5px;top:494.2px" width="14" height="14" viewBox="0 0 16 16"><rect x="1" y="1" width="9" height="9" fill="none" stroke="#cfcfcf" stroke-width="1.2"/><rect x="5" y="6" width="10" height="9" fill="#535353" stroke="#cfcfcf" stroke-width="1.2"/></svg>
<div class="t" style="left:946.3px;top:496.2px;font-size:10.0px;color:#d4d4d4;">アート...</div>
<svg class="a" style="left:924.5px;top:518.1px" width="14" height="14" viewBox="0 0 16 16"><path d="M7 1.5H1.5V15H14.5V9" fill="none" stroke="#cfcfcf" stroke-width="1.4"/><path d="M7 9L14 2M9.5 1.5H14.5V6.5" fill="none" stroke="#cfcfcf" stroke-width="1.4"/></svg>
<div class="t" style="left:946.3px;top:520.1px;font-size:10.0px;color:#d4d4d4;">アセッ...</div>
<div class="a" style="left:999px;top:65px;width:51px;height:22px;background:#535353"></div>
<div class="a" style="left:1050px;top:65px;width:150px;height:22px;background:#434343"></div>
<div class="a" style="left:1104px;top:65px;width:1px;height:22px;background:#3a3a3a"></div>
<div class="a" style="left:1166.5px;top:65px;width:1px;height:22px;background:#3a3a3a"></div>
<div class="t" style="left:1007.0px;top:71.0px;font-size:10.0px;color:#d8d8d8;transform:scaleX(0.895);transform-origin:0 0;">レイヤー</div>
<div class="t" style="left:1058.2px;top:71.0px;font-size:10.0px;color:#a8a8a8;transform:scaleX(0.854);transform-origin:0 0;">プロパティ</div>
<div class="t" style="left:1112.0px;top:71.0px;font-size:10.0px;color:#a8a8a8;transform:scaleX(0.909);transform-origin:0 0;">CC ライブラ</div>
<svg class="a" style="left:1185.5px;top:71.5px" width="9" height="8" viewBox="0 0 9 8"><path d="M0 1H9M0 4H9M0 7H9" stroke="#bdbdbd" stroke-width="1.3"/></svg>
<div class="a" style="left:1003.5px;top:91.5px;width:191px;height:619px;box-sizing:border-box;border:1px solid #5a5a5a;border-radius:2px"></div>
<div class="a" style="left:1020.5px;top:92px;width:1px;height:18.5px;background:#4a4a4a"></div>
<div class="a" style="left:1039.5px;top:92px;width:1px;height:18.5px;background:#4a4a4a"></div>
<div class="a" style="left:1044.5px;top:92px;width:1px;height:18.5px;background:#4a4a4a"></div>
<div class="a" style="left:1164px;top:92px;width:1px;height:18.5px;background:#4a4a4a"></div>
<div class="chev" style="left:1051px;top:97px;width:3.5px;height:3.5px"></div>
<div class="a" style="left:1064px;top:94px;width:14.5px;height:14.5px;background:#fdf3cf;box-shadow:0 0 0 1.2px #1a1a1a"></div>
<div class="t" style="left:1083.8px;top:96.5px;font-size:10.0px;color:#cfcfcf;transform:scaleX(0.931);transform-origin:0 0;">パターン...</div>
<div class="a" style="left:1004px;top:110.5px;width:190px;height:16.5px;background:#4b5d76"></div>
<div class="a" style="left:1020.5px;top:110.5px;width:1px;height:16.5px;background:#55667e"></div>
<div class="a" style="left:1039.5px;top:110.5px;width:1px;height:16.5px;background:#55667e"></div>
<div class="a" style="left:1164px;top:110.5px;width:1px;height:16.5px;background:#55667e"></div>
<svg class="a" style="left:1007px;top:114.5px" width="12" height="8" viewBox="0 0 12 8"><path d="M0.5 4C2.5 1 9.5 1 11.5 4C9.5 7 2.5 7 0.5 4Z" fill="none" stroke="#d8d8d8" stroke-width="1.1"/><circle cx="6" cy="4" r="1.8" fill="#d8d8d8"/></svg>
<div class="a" style="left:1039.8px;top:111px;width:2.7px;height:15.5px;background:#e04848"></div>
<svg class="a" style="left:1068px;top:115px" width="5" height="8" viewBox="0 0 5 8"><path d="M1 1L4 4L1 7" fill="none" stroke="#d8d8d8" stroke-width="1.2"/></svg>
<div class="a" style="left:1083.5px;top:111.5px;width:14.5px;height:14.5px;background:#fdf3cf;box-shadow:0 0 0 1.2px #1a1a1a"></div>
<div class="t" style="left:1101.8px;top:114.0px;font-size:10.0px;color:#e0e0e0;transform:scaleX(0.988);transform-origin:0 0;">新規...</div>
<div class="a" style="left:1170px;top:115px;width:6px;height:6px;border:1.2px solid #d8d8d8;border-radius:50%"></div>
<svg class="a" style="left:1189.5px;top:111px" width="5" height="5" viewBox="0 0 5 5"><path d="M0 0H5V5Z" fill="#e0e0e0"/></svg>
<svg class="a" style="left:1056px;top:711px" width="124" height="15" viewBox="0 0 124 15"><path d="M6 2H2V13H13V9M7 8L13 2M9 2H13V6" fill="none" stroke="#777" stroke-width="1.1"/><circle cx="29" cy="6.5" r="4" fill="none" stroke="#777" stroke-width="1.1"/><path d="M26 9.5L22.5 13" stroke="#777" stroke-width="1.3"/><rect x="44" y="2.5" width="10" height="10" fill="none" stroke="#777" stroke-width="1.1"/><rect x="46.5" y="5" width="5" height="5" fill="#777"/><path d="M66 3V7H70M68.5 5.5L70 7L68.5 8.5" fill="none" stroke="#777" stroke-width="1"/><rect x="71" y="4" width="5" height="8" fill="#777"/><path d="M87 2.5H96V12.5H90L87 9.5Z" fill="#777"/><path d="M109 4.5H117M111 4.5V3H115V4.5M110 5.5L110.8 13H115.2L116 5.5" fill="none" stroke="#777" stroke-width="1.1"/></svg>
<script>(function(){var W=[112.4, 36.0, 84.2, 39.0, 16.5, 19.0, 19.5, 39.0, 46.0, 28.0, 44.0, 79.0, 38.0, -1, 188.0, -1, 208.0, 96.0, 53.3, 21.3, 52.7, 31.0, 5.0, 122.8, 80.7, 26.0, 117.0, 65.0, 39.5, 85.0, 16.7, 16.0, 57.0, 26.0, 63.5, 177.2, 158.0, 45.9, 27.0, 45.9, 27.0, 36.0, 44.5, 26.0, 86.6, 22.0, 99.0, 109.0, 44.6, 13.0, 13.0, 13.0, 15.0, -1, -1, -1, -1, -1, -1, -1, -1, -1, -1, -1, -1, -1, -1, -1, -1, -1, -1, 35.8, 42.7, 52.0, 45.0, 28.0];var e=document.querySelectorAll(".t");for(var i=0;i<e.length&&i<W.length;i++){if(W[i]<0)continue;var s=e[i].style;var old=s.transform;s.transform="none";var w=e[i].getBoundingClientRect().width;if(w>0){s.transform="scaleX("+(W[i]/w).toFixed(3)+")";}else{s.transform=old;}}})();</script></body></html>
